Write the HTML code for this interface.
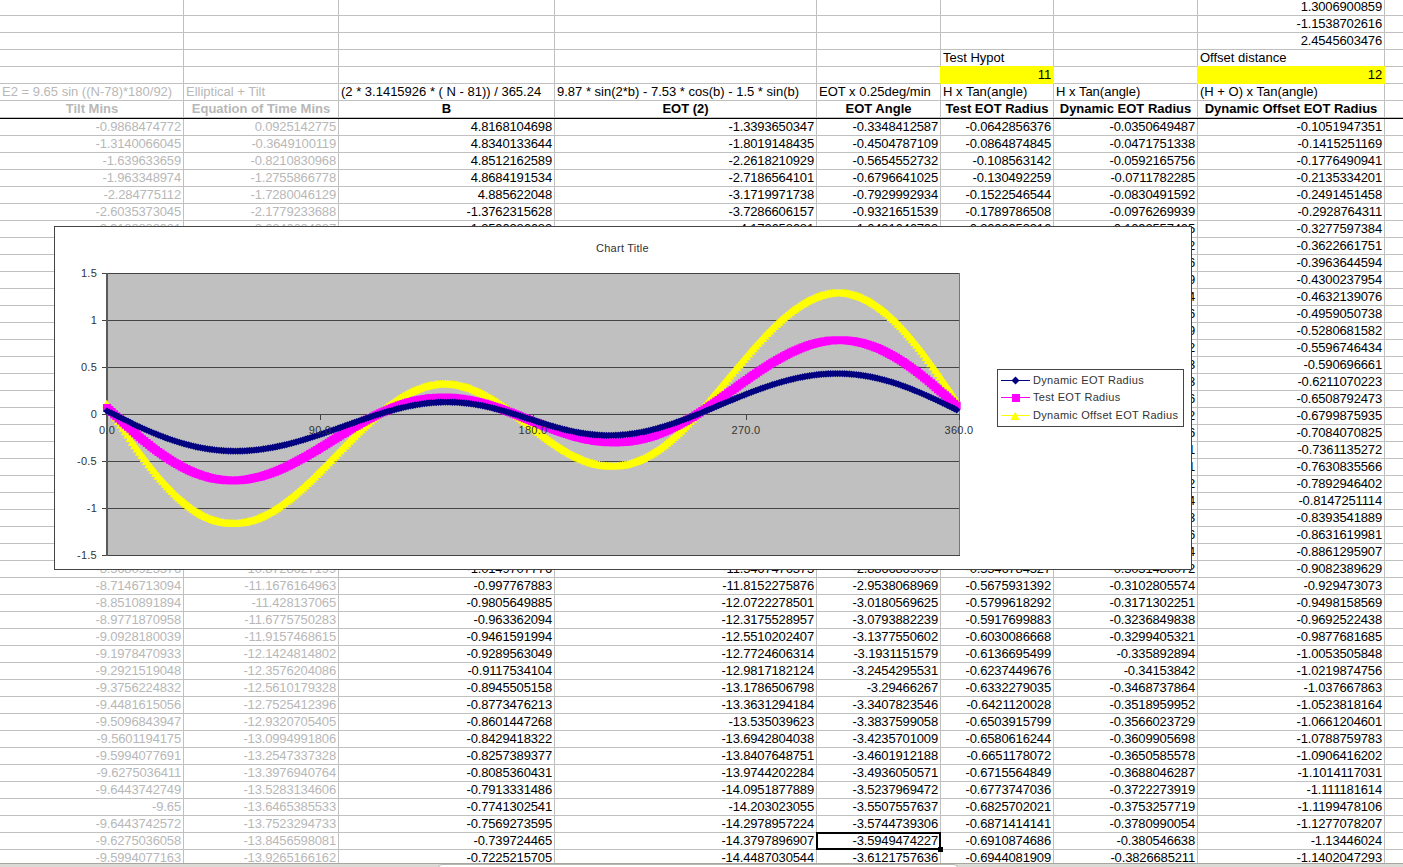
<!DOCTYPE html><html><head><meta charset="utf-8"><style>
html,body{margin:0;padding:0;}
body{width:1403px;height:867px;overflow:hidden;position:relative;background:#fff;font-family:"Liberation Sans",sans-serif;font-size:13px;color:#000;}
.h{position:absolute;left:0;width:1403px;height:1px;background:#c0c0c0}
.v{position:absolute;top:0;height:864px;width:1px;background:#c0c0c0}
.t{position:absolute;height:16px;line-height:16px;white-space:nowrap;overflow:visible}
.r{text-align:right}
.c{text-align:center;font-weight:bold}
.g{color:#b8b8b8}
.n{letter-spacing:-0.15px}

</style></head><body>
<div class="h" style="top:15px"></div>
<div class="h" style="top:32px"></div>
<div class="h" style="top:49px"></div>
<div class="h" style="top:66px"></div>
<div class="h" style="top:83px"></div>
<div class="h" style="top:100px"></div>
<div class="h" style="top:117px"></div>
<div class="h" style="top:135px"></div>
<div class="h" style="top:152px"></div>
<div class="h" style="top:169px"></div>
<div class="h" style="top:186px"></div>
<div class="h" style="top:203px"></div>
<div class="h" style="top:220px"></div>
<div class="h" style="top:237px"></div>
<div class="h" style="top:254px"></div>
<div class="h" style="top:271px"></div>
<div class="h" style="top:288px"></div>
<div class="h" style="top:305px"></div>
<div class="h" style="top:322px"></div>
<div class="h" style="top:339px"></div>
<div class="h" style="top:356px"></div>
<div class="h" style="top:373px"></div>
<div class="h" style="top:390px"></div>
<div class="h" style="top:407px"></div>
<div class="h" style="top:424px"></div>
<div class="h" style="top:441px"></div>
<div class="h" style="top:458px"></div>
<div class="h" style="top:475px"></div>
<div class="h" style="top:492px"></div>
<div class="h" style="top:509px"></div>
<div class="h" style="top:526px"></div>
<div class="h" style="top:543px"></div>
<div class="h" style="top:560px"></div>
<div class="h" style="top:577px"></div>
<div class="h" style="top:594px"></div>
<div class="h" style="top:611px"></div>
<div class="h" style="top:628px"></div>
<div class="h" style="top:645px"></div>
<div class="h" style="top:662px"></div>
<div class="h" style="top:679px"></div>
<div class="h" style="top:696px"></div>
<div class="h" style="top:713px"></div>
<div class="h" style="top:730px"></div>
<div class="h" style="top:747px"></div>
<div class="h" style="top:764px"></div>
<div class="h" style="top:781px"></div>
<div class="h" style="top:798px"></div>
<div class="h" style="top:815px"></div>
<div class="h" style="top:832px"></div>
<div class="h" style="top:849px"></div>
<div class="v" style="left:183px"></div>
<div class="v" style="left:338px"></div>
<div class="v" style="left:554px"></div>
<div class="v" style="left:816px"></div>
<div class="v" style="left:940px"></div>
<div class="v" style="left:1053px"></div>
<div class="v" style="left:1197px"></div>
<div class="v" style="left:1384px"></div>
<div style="position:absolute;left:940px;top:66px;width:114px;height:18px;background:#ffff00"></div>
<div style="position:absolute;left:1197px;top:66px;width:188px;height:18px;background:#ffff00"></div>
<div style="position:absolute;left:0;top:118px;width:1403px;height:1px;background:#000"></div>
<div class="t r n" style="left:1198px;width:184px;top:-1px;">1.3006900859</div>
<div class="t r n" style="left:1198px;width:184px;top:16px;">-1.1538702616</div>
<div class="t r n" style="left:1198px;width:184px;top:33px;">2.4545603476</div>
<div class="t l" style="left:943px;top:50px;">Test Hypot</div>
<div class="t l" style="left:1200px;top:50px;">Offset distance</div>
<div class="t r n" style="left:941px;width:110px;top:67px;">11</div>
<div class="t r n" style="left:1198px;width:184px;top:67px;">12</div>
<div class="t l g" style="left:2px;top:84px;">E2 = 9.65 sin ((N-78)*180/92)</div>
<div class="t l g" style="left:186px;top:84px;">Elliptical + Tilt</div>
<div class="t l" style="left:341px;top:84px;">(2 * 3.1415926 * ( N - 81)) / 365.24</div>
<div class="t l" style="left:557px;top:84px;">9.87 * sin(2*b) - 7.53 * cos(b) - 1.5 * sin(b)</div>
<div class="t l" style="left:819px;top:84px;">EOT x 0.25deg/min</div>
<div class="t l" style="left:943px;top:84px;">H x Tan(angle)</div>
<div class="t l" style="left:1056px;top:84px;">H x Tan(angle)</div>
<div class="t l" style="left:1200px;top:84px;">(H + O) x Tan(angle)</div>
<div class="t c g" style="left:1px;width:182px;top:101px;">Tilt Mins</div>
<div class="t c g" style="left:184px;width:154px;top:101px;">Equation of Time Mins</div>
<div class="t c" style="left:339px;width:215px;top:101px;">B</div>
<div class="t c" style="left:555px;width:261px;top:101px;">EOT (2)</div>
<div class="t c" style="left:817px;width:123px;top:101px;">EOT Angle</div>
<div class="t c" style="left:941px;width:112px;top:101px;">Test EOT Radius</div>
<div class="t c" style="left:1054px;width:143px;top:101px;">Dynamic EOT Radius</div>
<div class="t c" style="left:1198px;width:186px;top:101px;">Dynamic Offset EOT Radius</div>
<div class="t r n g" style="left:1px;width:180px;top:119px;">-0.9868474772</div>
<div class="t r n g" style="left:184px;width:152px;top:119px;">0.0925142775</div>
<div class="t r n" style="left:339px;width:213px;top:119px;">4.8168104698</div>
<div class="t r n" style="left:555px;width:259px;top:119px;">-1.3393650347</div>
<div class="t r n" style="left:817px;width:121px;top:119px;">-0.3348412587</div>
<div class="t r n" style="left:941px;width:110px;top:119px;">-0.0642856376</div>
<div class="t r n" style="left:1054px;width:141px;top:119px;">-0.0350649487</div>
<div class="t r n" style="left:1198px;width:184px;top:119px;">-0.1051947351</div>
<div class="t r n g" style="left:1px;width:180px;top:136px;">-1.3140066045</div>
<div class="t r n g" style="left:184px;width:152px;top:136px;">-0.3649100119</div>
<div class="t r n" style="left:339px;width:213px;top:136px;">4.8340133644</div>
<div class="t r n" style="left:555px;width:259px;top:136px;">-1.8019148435</div>
<div class="t r n" style="left:817px;width:121px;top:136px;">-0.4504787109</div>
<div class="t r n" style="left:941px;width:110px;top:136px;">-0.0864874845</div>
<div class="t r n" style="left:1054px;width:141px;top:136px;">-0.0471751338</div>
<div class="t r n" style="left:1198px;width:184px;top:136px;">-0.1415251169</div>
<div class="t r n g" style="left:1px;width:180px;top:153px;">-1.639633659</div>
<div class="t r n g" style="left:184px;width:152px;top:153px;">-0.8210830968</div>
<div class="t r n" style="left:339px;width:213px;top:153px;">4.8512162589</div>
<div class="t r n" style="left:555px;width:259px;top:153px;">-2.2618210929</div>
<div class="t r n" style="left:817px;width:121px;top:153px;">-0.5654552732</div>
<div class="t r n" style="left:941px;width:110px;top:153px;">-0.108563142</div>
<div class="t r n" style="left:1054px;width:141px;top:153px;">-0.0592165756</div>
<div class="t r n" style="left:1198px;width:184px;top:153px;">-0.1776490941</div>
<div class="t r n g" style="left:1px;width:180px;top:170px;">-1.963348974</div>
<div class="t r n g" style="left:184px;width:152px;top:170px;">-1.2755866778</div>
<div class="t r n" style="left:339px;width:213px;top:170px;">4.8684191534</div>
<div class="t r n" style="left:555px;width:259px;top:170px;">-2.7186564101</div>
<div class="t r n" style="left:817px;width:121px;top:170px;">-0.6796641025</div>
<div class="t r n" style="left:941px;width:110px;top:170px;">-0.130492259</div>
<div class="t r n" style="left:1054px;width:141px;top:170px;">-0.0711782285</div>
<div class="t r n" style="left:1198px;width:184px;top:170px;">-0.2135334201</div>
<div class="t r n g" style="left:1px;width:180px;top:187px;">-2.284775112</div>
<div class="t r n g" style="left:184px;width:152px;top:187px;">-1.7280046129</div>
<div class="t r n" style="left:339px;width:213px;top:187px;">4.885622048</div>
<div class="t r n" style="left:555px;width:259px;top:187px;">-3.1719971738</div>
<div class="t r n" style="left:817px;width:121px;top:187px;">-0.7929992934</div>
<div class="t r n" style="left:941px;width:110px;top:187px;">-0.1522546544</div>
<div class="t r n" style="left:1054px;width:141px;top:187px;">-0.0830491592</div>
<div class="t r n" style="left:1198px;width:184px;top:187px;">-0.2491451458</div>
<div class="t r n g" style="left:1px;width:180px;top:204px;">-2.6035373045</div>
<div class="t r n g" style="left:184px;width:152px;top:204px;">-2.1779233688</div>
<div class="t r n" style="left:339px;width:213px;top:204px;">-1.3762315628</div>
<div class="t r n" style="left:555px;width:259px;top:204px;">-3.7286606157</div>
<div class="t r n" style="left:817px;width:121px;top:204px;">-0.9321651539</div>
<div class="t r n" style="left:941px;width:110px;top:204px;">-0.1789786508</div>
<div class="t r n" style="left:1054px;width:141px;top:204px;">-0.0976269939</div>
<div class="t r n" style="left:1198px;width:184px;top:204px;">-0.2928764311</div>
<div class="t r n g" style="left:1px;width:180px;top:221px;">-2.9188882921</div>
<div class="t r n g" style="left:184px;width:152px;top:221px;">-2.6240634987</div>
<div class="t r n" style="left:339px;width:213px;top:221px;">-1.3590286683</div>
<div class="t r n" style="left:555px;width:259px;top:221px;">-4.172658681</div>
<div class="t r n" style="left:817px;width:121px;top:221px;">-1.0431646703</div>
<div class="t r n" style="left:941px;width:110px;top:221px;">-0.2002953316</div>
<div class="t r n" style="left:1054px;width:141px;top:221px;">-0.1092557405</div>
<div class="t r n" style="left:1198px;width:184px;top:221px;">-0.3277597384</div>
<div class="t r n g" style="left:1px;width:180px;top:238px;">-3.2315882575</div>
<div class="t r n g" style="left:184px;width:152px;top:238px;">-3.0720095317</div>
<div class="t r n" style="left:339px;width:213px;top:238px;">-1.3418257737</div>
<div class="t r n" style="left:555px;width:259px;top:238px;">-4.6118209902</div>
<div class="t r n" style="left:817px;width:121px;top:238px;">-1.1529552475</div>
<div class="t r n" style="left:941px;width:110px;top:238px;">-0.2213813142</div>
<div class="t r n" style="left:1054px;width:141px;top:238px;">-0.1207592862</div>
<div class="t r n" style="left:1198px;width:184px;top:238px;">-0.3622661751</div>
<div class="t r n g" style="left:1px;width:180px;top:255px;">-3.5401432115</div>
<div class="t r n g" style="left:184px;width:152px;top:255px;">-3.5121725994</div>
<div class="t r n" style="left:339px;width:213px;top:255px;">-1.3246228792</div>
<div class="t r n" style="left:555px;width:259px;top:255px;">-5.0457449492</div>
<div class="t r n" style="left:817px;width:121px;top:255px;">-1.2614362373</div>
<div class="t r n" style="left:941px;width:110px;top:255px;">-0.2422173642</div>
<div class="t r n" style="left:1054px;width:141px;top:255px;">-0.1321273346</div>
<div class="t r n" style="left:1198px;width:184px;top:255px;">-0.3963644594</div>
<div class="t r n g" style="left:1px;width:180px;top:272px;">-3.844570517</div>
<div class="t r n g" style="left:184px;width:152px;top:272px;">-3.9482163068</div>
<div class="t r n" style="left:339px;width:213px;top:272px;">-1.3074199847</div>
<div class="t r n" style="left:555px;width:259px;top:272px;">-5.4740340991</div>
<div class="t r n" style="left:817px;width:121px;top:272px;">-1.3685085248</div>
<div class="t r n" style="left:941px;width:110px;top:272px;">-0.2627845317</div>
<div class="t r n" style="left:1054px;width:141px;top:272px;">-0.1433497609</div>
<div class="t r n" style="left:1198px;width:184px;top:272px;">-0.4300237954</div>
<div class="t r n g" style="left:1px;width:180px;top:289px;">-4.1445152252</div>
<div class="t r n g" style="left:184px;width:152px;top:289px;">-4.3797467045</div>
<div class="t r n" style="left:339px;width:213px;top:289px;">-1.2902170901</div>
<div class="t r n" style="left:555px;width:259px;top:289px;">-5.8962985509</div>
<div class="t r n" style="left:817px;width:121px;top:289px;">-1.4740746377</div>
<div class="t r n" style="left:941px;width:110px;top:289px;">-0.2830641661</div>
<div class="t r n" style="left:1054px;width:141px;top:289px;">-0.1544166354</div>
<div class="t r n" style="left:1198px;width:184px;top:289px;">-0.4632139076</div>
<div class="t r n g" style="left:1px;width:180px;top:306px;">-4.4396276141</div>
<div class="t r n g" style="left:184px;width:152px;top:306px;">-4.8063750788</div>
<div class="t r n" style="left:339px;width:213px;top:306px;">-1.2730141956</div>
<div class="t r n" style="left:555px;width:259px;top:306px;">-6.3121554119</div>
<div class="t r n" style="left:817px;width:121px;top:306px;">-1.578038853</div>
<div class="t r n" style="left:941px;width:110px;top:306px;">-0.3030379365</div>
<div class="t r n" style="left:1054px;width:141px;top:306px;">-0.1653182346</div>
<div class="t r n" style="left:1198px;width:184px;top:306px;">-0.4959050738</div>
<div class="t r n g" style="left:1px;width:180px;top:323px;">-4.7295635958</div>
<div class="t r n g" style="left:184px;width:152px;top:323px;">-5.2277183711</div>
<div class="t r n" style="left:339px;width:213px;top:323px;">-1.2558113011</div>
<div class="t r n" style="left:555px;width:259px;top:323px;">-6.7212292045</div>
<div class="t r n" style="left:817px;width:121px;top:323px;">-1.6803073011</div>
<div class="t r n" style="left:941px;width:110px;top:323px;">-0.3226878508</div>
<div class="t r n" style="left:1054px;width:141px;top:323px;">-0.1760450489</div>
<div class="t r n" style="left:1198px;width:184px;top:323px;">-0.5280681582</div>
<div class="t r n g" style="left:1px;width:180px;top:340px;">-5.0139851178</div>
<div class="t r n g" style="left:184px;width:152px;top:340px;">-5.6433995902</div>
<div class="t r n" style="left:339px;width:213px;top:340px;">-1.2386084065</div>
<div class="t r n" style="left:555px;width:259px;top:340px;">-7.1231522765</div>
<div class="t r n" style="left:817px;width:121px;top:340px;">-1.7807880691</div>
<div class="t r n" style="left:941px;width:110px;top:340px;">-0.3419962762</div>
<div class="t r n" style="left:1054px;width:141px;top:340px;">-0.1865877962</div>
<div class="t r n" style="left:1198px;width:184px;top:340px;">-0.5596746434</div>
<div class="t r n g" style="left:1px;width:180px;top:357px;">-5.2925605576</div>
<div class="t r n g" style="left:184px;width:152px;top:357px;">-6.0530482183</div>
<div class="t r n" style="left:339px;width:213px;top:357px;">-1.221405512</div>
<div class="t r n" style="left:555px;width:259px;top:357px;">-7.5175652011</div>
<div class="t r n" style="left:817px;width:121px;top:357px;">-1.8793913003</div>
<div class="t r n" style="left:941px;width:110px;top:357px;">-0.3609459569</div>
<div class="t r n" style="left:1054px;width:141px;top:357px;">-0.1969374353</div>
<div class="t r n" style="left:1198px;width:184px;top:357px;">-0.590696661</div>
<div class="t r n g" style="left:1px;width:180px;top:374px;">-5.5649651084</div>
<div class="t r n g" style="left:184px;width:152px;top:374px;">-6.4563006093</div>
<div class="t r n" style="left:339px;width:213px;top:374px;">-1.2042026175</div>
<div class="t r n" style="left:555px;width:259px;top:374px;">-7.9041171683</div>
<div class="t r n" style="left:817px;width:121px;top:374px;">-1.9760292921</div>
<div class="t r n" style="left:941px;width:110px;top:374px;">-0.379520034</div>
<div class="t r n" style="left:1054px;width:141px;top:374px;">-0.2070851673</div>
<div class="t r n" style="left:1198px;width:184px;top:374px;">-0.6211070223</div>
<div class="t r n g" style="left:1px;width:180px;top:391px;">-5.8308811589</div>
<div class="t r n g" style="left:184px;width:152px;top:391px;">-6.8528003788</div>
<div class="t r n" style="left:339px;width:213px;top:391px;">-1.1869997229</div>
<div class="t r n" style="left:555px;width:259px;top:391px;">-8.2824663659</div>
<div class="t r n" style="left:817px;width:121px;top:391px;">-2.0706165915</div>
<div class="t r n" style="left:941px;width:110px;top:391px;">-0.3977020633</div>
<div class="t r n" style="left:1054px;width:141px;top:391px;">-0.2170224516</div>
<div class="t r n" style="left:1198px;width:184px;top:391px;">-0.6508792473</div>
<div class="t r n g" style="left:1px;width:180px;top:408px;">-6.0899986627</div>
<div class="t r n g" style="left:184px;width:152px;top:408px;">-7.2421987857</div>
<div class="t r n" style="left:339px;width:213px;top:408px;">-1.1697968284</div>
<div class="t r n" style="left:555px;width:259px;top:408px;">-8.6522803494</div>
<div class="t r n" style="left:817px;width:121px;top:408px;">-2.1630700873</div>
<div class="t r n" style="left:941px;width:110px;top:408px;">-0.4154760336</div>
<div class="t r n" style="left:1054px;width:141px;top:408px;">-0.2267410112</div>
<div class="t r n" style="left:1198px;width:184px;top:408px;">-0.6799875935</div>
<div class="t r n g" style="left:1px;width:180px;top:425px;">-6.3420155006</div>
<div class="t r n g" style="left:184px;width:152px;top:425px;">-7.6241551058</div>
<div class="t r n" style="left:339px;width:213px;top:425px;">-1.1525939339</div>
<div class="t r n" style="left:555px;width:259px;top:425px;">-9.0132364018</div>
<div class="t r n" style="left:817px;width:121px;top:425px;">-2.2533091005</div>
<div class="t r n" style="left:941px;width:110px;top:425px;">-0.432826384</div>
<div class="t r n" style="left:1054px;width:141px;top:425px;">-0.2362328456</div>
<div class="t r n" style="left:1198px;width:184px;top:425px;">-0.7084070825</div>
<div class="t r n g" style="left:1px;width:180px;top:442px;">-6.5866378321</div>
<div class="t r n g" style="left:184px;width:152px;top:442px;">-7.9983369949</div>
<div class="t r n" style="left:339px;width:213px;top:442px;">-1.1353910393</div>
<div class="t r n" style="left:555px;width:259px;top:442px;">-9.3650218814</div>
<div class="t r n" style="left:817px;width:121px;top:442px;">-2.3412554703</div>
<div class="t r n" style="left:941px;width:110px;top:442px;">-0.4497380214</div>
<div class="t r n" style="left:1054px;width:141px;top:442px;">-0.2454902311</div>
<div class="t r n" style="left:1198px;width:184px;top:442px;">-0.7361135272</div>
<div class="t r n g" style="left:1px;width:180px;top:459px;">-6.8235804385</div>
<div class="t r n g" style="left:184px;width:152px;top:459px;">-8.3644208432</div>
<div class="t r n" style="left:339px;width:213px;top:459px;">-1.1181881448</div>
<div class="t r n" style="left:555px;width:259px;top:459px;">-9.7073345577</div>
<div class="t r n" style="left:817px;width:121px;top:459px;">-2.4268336394</div>
<div class="t r n" style="left:941px;width:110px;top:459px;">-0.4661963368</div>
<div class="t r n" style="left:1054px;width:141px;top:459px;">-0.2545057341</div>
<div class="t r n" style="left:1198px;width:184px;top:459px;">-0.7630835566</div>
<div class="t r n g" style="left:1px;width:180px;top:476px;">-7.0525670553</div>
<div class="t r n g" style="left:184px;width:152px;top:476px;">-8.722092119</div>
<div class="t r n" style="left:339px;width:213px;top:476px;">-1.1009852502</div>
<div class="t r n" style="left:555px;width:259px;top:476px;">-10.0398829358</div>
<div class="t r n" style="left:817px;width:121px;top:476px;">-2.5099707339</div>
<div class="t r n" style="left:941px;width:110px;top:476px;">-0.4821872219</div>
<div class="t r n" style="left:1054px;width:141px;top:476px;">-0.2632722162</div>
<div class="t r n" style="left:1198px;width:184px;top:476px;">-0.7892946402</div>
<div class="t r n g" style="left:1px;width:180px;top:493px;">-7.2733306944</div>
<div class="t r n g" style="left:184px;width:152px;top:493px;">-9.0710457021</div>
<div class="t r n" style="left:339px;width:213px;top:493px;">-1.0837823557</div>
<div class="t r n" style="left:555px;width:259px;top:493px;">-10.3623865673</div>
<div class="t r n" style="left:817px;width:121px;top:493px;">-2.5905966418</div>
<div class="t r n" style="left:941px;width:110px;top:493px;">-0.4976970851</div>
<div class="t r n" style="left:1054px;width:141px;top:493px;">-0.2717828364</div>
<div class="t r n" style="left:1198px;width:184px;top:493px;">-0.8147251114</div>
<div class="t r n g" style="left:1px;width:180px;top:510px;">-7.4856139553</div>
<div class="t r n g" style="left:184px;width:152px;top:510px;">-9.4109862067</div>
<div class="t r n" style="left:339px;width:213px;top:510px;">-1.0665794612</div>
<div class="t r n" style="left:555px;width:259px;top:510px;">-10.6745763491</div>
<div class="t r n" style="left:817px;width:121px;top:510px;">-2.6686440873</div>
<div class="t r n" style="left:941px;width:110px;top:510px;">-0.5127128657</div>
<div class="t r n" style="left:1054px;width:141px;top:510px;">-0.2800310623</div>
<div class="t r n" style="left:1198px;width:184px;top:510px;">-0.8393541889</div>
<div class="t r n g" style="left:1px;width:180px;top:527px;">-7.6891693252</div>
<div class="t r n g" style="left:184px;width:152px;top:527px;">-9.7416282925</div>
<div class="t r n" style="left:339px;width:213px;top:527px;">-1.0493765666</div>
<div class="t r n" style="left:555px;width:259px;top:527px;">-10.9761948086</div>
<div class="t r n" style="left:817px;width:121px;top:527px;">-2.7440487021</div>
<div class="t r n" style="left:941px;width:110px;top:527px;">-0.5272220498</div>
<div class="t r n" style="left:1054px;width:141px;top:527px;">-0.2880106716</div>
<div class="t r n" style="left:1198px;width:184px;top:527px;">-0.8631619981</div>
<div class="t r n g" style="left:1px;width:180px;top:544px;">-7.8837594676</div>
<div class="t r n g" style="left:184px;width:152px;top:544px;">-10.0626969646</div>
<div class="t r n" style="left:339px;width:213px;top:544px;">-1.0321736721</div>
<div class="t r n" style="left:555px;width:259px;top:544px;">-11.266996375</div>
<div class="t r n" style="left:817px;width:121px;top:544px;">-2.8167490937</div>
<div class="t r n" style="left:941px;width:110px;top:544px;">-0.5412126837</div>
<div class="t r n" style="left:1054px;width:141px;top:544px;">-0.2957157544</div>
<div class="t r n" style="left:1198px;width:184px;top:544px;">-0.8861295907</div>
<div class="t r n g" style="left:1px;width:180px;top:561px;">-8.5680923576</div>
<div class="t r n g" style="left:184px;width:152px;top:561px;">-10.8728627199</div>
<div class="t r n" style="left:339px;width:213px;top:561px;">-1.0149707776</div>
<div class="t r n" style="left:555px;width:259px;top:561px;">-11.5467476373</div>
<div class="t r n" style="left:817px;width:121px;top:561px;">-2.8866869093</div>
<div class="t r n" style="left:941px;width:110px;top:561px;">-0.5546784527</div>
<div class="t r n" style="left:1054px;width:141px;top:561px;">-0.3031486072</div>
<div class="t r n" style="left:1198px;width:184px;top:561px;">-0.9082389629</div>
<div class="t r n g" style="left:1px;width:180px;top:578px;">-8.7146713094</div>
<div class="t r n g" style="left:184px;width:152px;top:578px;">-11.1676164963</div>
<div class="t r n" style="left:339px;width:213px;top:578px;">-0.997767883</div>
<div class="t r n" style="left:555px;width:259px;top:578px;">-11.8152275876</div>
<div class="t r n" style="left:817px;width:121px;top:578px;">-2.9538068969</div>
<div class="t r n" style="left:941px;width:110px;top:578px;">-0.5675931392</div>
<div class="t r n" style="left:1054px;width:141px;top:578px;">-0.3102805574</div>
<div class="t r n" style="left:1198px;width:184px;top:578px;">-0.929473073</div>
<div class="t r n g" style="left:1px;width:180px;top:595px;">-8.8510891894</div>
<div class="t r n g" style="left:184px;width:152px;top:595px;">-11.428137065</div>
<div class="t r n" style="left:339px;width:213px;top:595px;">-0.9805649885</div>
<div class="t r n" style="left:555px;width:259px;top:595px;">-12.0722278501</div>
<div class="t r n" style="left:817px;width:121px;top:595px;">-3.0180569625</div>
<div class="t r n" style="left:941px;width:110px;top:595px;">-0.5799618292</div>
<div class="t r n" style="left:1054px;width:141px;top:595px;">-0.3171302251</div>
<div class="t r n" style="left:1198px;width:184px;top:595px;">-0.9498158569</div>
<div class="t r n g" style="left:1px;width:180px;top:612px;">-8.9771870958</div>
<div class="t r n g" style="left:184px;width:152px;top:612px;">-11.6775750283</div>
<div class="t r n" style="left:339px;width:213px;top:612px;">-0.963362094</div>
<div class="t r n" style="left:555px;width:259px;top:612px;">-12.3175528957</div>
<div class="t r n" style="left:817px;width:121px;top:612px;">-3.0793882239</div>
<div class="t r n" style="left:941px;width:110px;top:612px;">-0.5917699883</div>
<div class="t r n" style="left:1054px;width:141px;top:612px;">-0.3236849838</div>
<div class="t r n" style="left:1198px;width:184px;top:612px;">-0.9692522438</div>
<div class="t r n g" style="left:1px;width:180px;top:629px;">-9.0928180039</div>
<div class="t r n g" style="left:184px;width:152px;top:629px;">-11.9157468615</div>
<div class="t r n" style="left:339px;width:213px;top:629px;">-0.9461591994</div>
<div class="t r n" style="left:555px;width:259px;top:629px;">-12.5510202407</div>
<div class="t r n" style="left:817px;width:121px;top:629px;">-3.1377550602</div>
<div class="t r n" style="left:941px;width:110px;top:629px;">-0.6030086668</div>
<div class="t r n" style="left:1054px;width:141px;top:629px;">-0.3299405321</div>
<div class="t r n" style="left:1198px;width:184px;top:629px;">-0.9877681685</div>
<div class="t r n g" style="left:1px;width:180px;top:646px;">-9.1978470933</div>
<div class="t r n g" style="left:184px;width:152px;top:646px;">-12.1424814802</div>
<div class="t r n" style="left:339px;width:213px;top:646px;">-0.9289563049</div>
<div class="t r n" style="left:555px;width:259px;top:646px;">-12.7724606314</div>
<div class="t r n" style="left:817px;width:121px;top:646px;">-3.1931151579</div>
<div class="t r n" style="left:941px;width:110px;top:646px;">-0.6136695499</div>
<div class="t r n" style="left:1054px;width:141px;top:646px;">-0.335892894</div>
<div class="t r n" style="left:1198px;width:184px;top:646px;">-1.0053505848</div>
<div class="t r n g" style="left:1px;width:180px;top:663px;">-9.2921519048</div>
<div class="t r n g" style="left:184px;width:152px;top:663px;">-12.3576204086</div>
<div class="t r n" style="left:339px;width:213px;top:663px;">-0.9117534104</div>
<div class="t r n" style="left:555px;width:259px;top:663px;">-12.9817182124</div>
<div class="t r n" style="left:817px;width:121px;top:663px;">-3.2454295531</div>
<div class="t r n" style="left:941px;width:110px;top:663px;">-0.6237449676</div>
<div class="t r n" style="left:1054px;width:141px;top:663px;">-0.34153842</div>
<div class="t r n" style="left:1198px;width:184px;top:663px;">-1.0219874756</div>
<div class="t r n g" style="left:1px;width:180px;top:680px;">-9.3756224832</div>
<div class="t r n g" style="left:184px;width:152px;top:680px;">-12.5610179328</div>
<div class="t r n" style="left:339px;width:213px;top:680px;">-0.8945505158</div>
<div class="t r n" style="left:555px;width:259px;top:680px;">-13.1786506798</div>
<div class="t r n" style="left:817px;width:121px;top:680px;">-3.29466267</div>
<div class="t r n" style="left:941px;width:110px;top:680px;">-0.6332279035</div>
<div class="t r n" style="left:1054px;width:141px;top:680px;">-0.3468737864</div>
<div class="t r n" style="left:1198px;width:184px;top:680px;">-1.037667863</div>
<div class="t r n g" style="left:1px;width:180px;top:697px;">-9.4481615056</div>
<div class="t r n g" style="left:184px;width:152px;top:697px;">-12.7525412396</div>
<div class="t r n" style="left:339px;width:213px;top:697px;">-0.8773476213</div>
<div class="t r n" style="left:555px;width:259px;top:697px;">-13.3631294184</div>
<div class="t r n" style="left:817px;width:121px;top:697px;">-3.3407823546</div>
<div class="t r n" style="left:941px;width:110px;top:697px;">-0.6421120028</div>
<div class="t r n" style="left:1054px;width:141px;top:697px;">-0.3518959952</div>
<div class="t r n" style="left:1198px;width:184px;top:697px;">-1.0523818164</div>
<div class="t r n g" style="left:1px;width:180px;top:714px;">-9.5096843947</div>
<div class="t r n g" style="left:184px;width:152px;top:714px;">-12.9320705405</div>
<div class="t r n" style="left:339px;width:213px;top:714px;">-0.8601447268</div>
<div class="t r n" style="left:555px;width:259px;top:714px;">-13.535039623</div>
<div class="t r n" style="left:817px;width:121px;top:714px;">-3.3837599058</div>
<div class="t r n" style="left:941px;width:110px;top:714px;">-0.6503915799</div>
<div class="t r n" style="left:1054px;width:141px;top:714px;">-0.3566023729</div>
<div class="t r n" style="left:1198px;width:184px;top:714px;">-1.0661204601</div>
<div class="t r n g" style="left:1px;width:180px;top:731px;">-9.5601194175</div>
<div class="t r n g" style="left:184px;width:152px;top:731px;">-13.0994991806</div>
<div class="t r n" style="left:339px;width:213px;top:731px;">-0.8429418322</div>
<div class="t r n" style="left:555px;width:259px;top:731px;">-13.6942804038</div>
<div class="t r n" style="left:817px;width:121px;top:731px;">-3.4235701009</div>
<div class="t r n" style="left:941px;width:110px;top:731px;">-0.6580616244</div>
<div class="t r n" style="left:1054px;width:141px;top:731px;">-0.3609905698</div>
<div class="t r n" style="left:1198px;width:184px;top:731px;">-1.0788759783</div>
<div class="t r n g" style="left:1px;width:180px;top:748px;">-9.5994077691</div>
<div class="t r n g" style="left:184px;width:152px;top:748px;">-13.2547337328</div>
<div class="t r n" style="left:339px;width:213px;top:748px;">-0.8257389377</div>
<div class="t r n" style="left:555px;width:259px;top:748px;">-13.8407648751</div>
<div class="t r n" style="left:817px;width:121px;top:748px;">-3.4601912188</div>
<div class="t r n" style="left:941px;width:110px;top:748px;">-0.6651178072</div>
<div class="t r n" style="left:1054px;width:141px;top:748px;">-0.3650585578</div>
<div class="t r n" style="left:1198px;width:184px;top:748px;">-1.0906416202</div>
<div class="t r n g" style="left:1px;width:180px;top:765px;">-9.6275036411</div>
<div class="t r n g" style="left:184px;width:152px;top:765px;">-13.3976940764</div>
<div class="t r n" style="left:339px;width:213px;top:765px;">-0.8085360431</div>
<div class="t r n" style="left:555px;width:259px;top:765px;">-13.9744202284</div>
<div class="t r n" style="left:817px;width:121px;top:765px;">-3.4936050571</div>
<div class="t r n" style="left:941px;width:110px;top:765px;">-0.6715564849</div>
<div class="t r n" style="left:1054px;width:141px;top:765px;">-0.3688046287</div>
<div class="t r n" style="left:1198px;width:184px;top:765px;">-1.1014117031</div>
<div class="t r n g" style="left:1px;width:180px;top:782px;">-9.6443742749</div>
<div class="t r n g" style="left:184px;width:152px;top:782px;">-13.5283134606</div>
<div class="t r n" style="left:339px;width:213px;top:782px;">-0.7913331486</div>
<div class="t r n" style="left:555px;width:259px;top:782px;">-14.0951877889</div>
<div class="t r n" style="left:817px;width:121px;top:782px;">-3.5237969472</div>
<div class="t r n" style="left:941px;width:110px;top:782px;">-0.6773747036</div>
<div class="t r n" style="left:1054px;width:141px;top:782px;">-0.3722273919</div>
<div class="t r n" style="left:1198px;width:184px;top:782px;">-1.111181614</div>
<div class="t r n g" style="left:1px;width:180px;top:799px;">-9.65</div>
<div class="t r n g" style="left:184px;width:152px;top:799px;">-13.6465385533</div>
<div class="t r n" style="left:339px;width:213px;top:799px;">-0.7741302541</div>
<div class="t r n" style="left:555px;width:259px;top:799px;">-14.203023055</div>
<div class="t r n" style="left:817px;width:121px;top:799px;">-3.5507557637</div>
<div class="t r n" style="left:941px;width:110px;top:799px;">-0.6825702021</div>
<div class="t r n" style="left:1054px;width:141px;top:799px;">-0.3753257719</div>
<div class="t r n" style="left:1198px;width:184px;top:799px;">-1.1199478106</div>
<div class="t r n g" style="left:1px;width:180px;top:816px;">-9.6443742572</div>
<div class="t r n g" style="left:184px;width:152px;top:816px;">-13.7523294733</div>
<div class="t r n" style="left:339px;width:213px;top:816px;">-0.7569273595</div>
<div class="t r n" style="left:555px;width:259px;top:816px;">-14.2978957224</div>
<div class="t r n" style="left:817px;width:121px;top:816px;">-3.5744739306</div>
<div class="t r n" style="left:941px;width:110px;top:816px;">-0.6871414141</div>
<div class="t r n" style="left:1054px;width:141px;top:816px;">-0.3780990054</div>
<div class="t r n" style="left:1198px;width:184px;top:816px;">-1.1277078207</div>
<div class="t r n g" style="left:1px;width:180px;top:833px;">-9.6275036058</div>
<div class="t r n g" style="left:184px;width:152px;top:833px;">-13.8456598081</div>
<div class="t r n" style="left:339px;width:213px;top:833px;">-0.739724465</div>
<div class="t r n" style="left:555px;width:259px;top:833px;">-14.3797896907</div>
<div class="t r n" style="left:817px;width:121px;top:833px;">-3.5949474227</div>
<div class="t r n" style="left:941px;width:110px;top:833px;">-0.6910874686</div>
<div class="t r n" style="left:1054px;width:141px;top:833px;">-0.380546638</div>
<div class="t r n" style="left:1198px;width:184px;top:833px;">-1.13446024</div>
<div class="t r n g" style="left:1px;width:180px;top:850px;">-9.5994077163</div>
<div class="t r n g" style="left:184px;width:152px;top:850px;">-13.9265166162</div>
<div class="t r n" style="left:339px;width:213px;top:850px;">-0.7225215705</div>
<div class="t r n" style="left:555px;width:259px;top:850px;">-14.4487030544</div>
<div class="t r n" style="left:817px;width:121px;top:850px;">-3.6121757636</div>
<div class="t r n" style="left:941px;width:110px;top:850px;">-0.6944081909</div>
<div class="t r n" style="left:1054px;width:141px;top:850px;">-0.3826685211</div>
<div class="t r n" style="left:1198px;width:184px;top:850px;">-1.1402047293</div>
<div style="position:absolute;left:816px;top:832px;width:121px;height:14px;border:2px solid #000"></div>
<div style="position:absolute;left:938px;top:847px;width:5px;height:5px;background:#000"></div>
<svg width="1138" height="344" style="position:absolute;left:54px;top:226px" viewBox="54 226 1138 344"><rect x="54.5" y="226.5" width="1137" height="343" fill="#fff" stroke="#444" stroke-width="1"/><rect x="107" y="273" width="853" height="282" fill="#c0c0c0"/><line x1="102" y1="273.5" x2="960" y2="273.5" stroke="#444" stroke-width="1"/><line x1="102" y1="320.5" x2="960" y2="320.5" stroke="#444" stroke-width="1"/><line x1="102" y1="367.5" x2="960" y2="367.5" stroke="#444" stroke-width="1"/><line x1="102" y1="414.5" x2="960" y2="414.5" stroke="#444" stroke-width="1"/><line x1="102" y1="461.5" x2="960" y2="461.5" stroke="#444" stroke-width="1"/><line x1="102" y1="508.5" x2="960" y2="508.5" stroke="#444" stroke-width="1"/><line x1="102" y1="555.5" x2="960" y2="555.5" stroke="#444" stroke-width="1"/><line x1="959.5" y1="273" x2="959.5" y2="555" stroke="#777" stroke-width="1"/><line x1="107.5" y1="414" x2="107.5" y2="420" stroke="#444" stroke-width="1"/><line x1="320.5" y1="414" x2="320.5" y2="420" stroke="#444" stroke-width="1"/><line x1="533.5" y1="414" x2="533.5" y2="420" stroke="#444" stroke-width="1"/><line x1="746.5" y1="414" x2="746.5" y2="420" stroke="#444" stroke-width="1"/><line x1="959.5" y1="414" x2="959.5" y2="420" stroke="#444" stroke-width="1"/><rect x="106" y="273" width="2" height="283" fill="#5a5a5a"/><path d="M106.75 400.17l0.5 0l4 7.5h-9l4 -7.5zM109.08 403.63l0.5 0l4 7.5h-9l4 -7.5zM111.42 407.10l0.5 0l4 7.5h-9l4 -7.5zM113.75 410.56l0.5 0l4 7.5h-9l4 -7.5zM116.09 414.01l0.5 0l4 7.5h-9l4 -7.5zM118.42 417.46l0.5 0l4 7.5h-9l4 -7.5zM120.76 420.89l0.5 0l4 7.5h-9l4 -7.5zM123.09 424.30l0.5 0l4 7.5h-9l4 -7.5zM125.42 427.70l0.5 0l4 7.5h-9l4 -7.5zM127.76 431.07l0.5 0l4 7.5h-9l4 -7.5zM130.09 434.42l0.5 0l4 7.5h-9l4 -7.5zM132.43 438.53l0.5 0l4 7.5h-9l4 -7.5zM134.76 441.81l0.5 0l4 7.5h-9l4 -7.5zM137.10 445.05l0.5 0l4 7.5h-9l4 -7.5zM139.43 448.26l0.5 0l4 7.5h-9l4 -7.5zM141.76 451.42l0.5 0l4 7.5h-9l4 -7.5zM144.10 454.54l0.5 0l4 7.5h-9l4 -7.5zM146.43 457.62l0.5 0l4 7.5h-9l4 -7.5zM148.77 460.64l0.5 0l4 7.5h-9l4 -7.5zM151.10 463.61l0.5 0l4 7.5h-9l4 -7.5zM153.43 466.53l0.5 0l4 7.5h-9l4 -7.5zM155.77 469.38l0.5 0l4 7.5h-9l4 -7.5zM158.10 472.18l0.5 0l4 7.5h-9l4 -7.5zM160.44 474.92l0.5 0l4 7.5h-9l4 -7.5zM162.77 477.59l0.5 0l4 7.5h-9l4 -7.5zM165.11 480.19l0.5 0l4 7.5h-9l4 -7.5zM167.44 482.73l0.5 0l4 7.5h-9l4 -7.5zM169.77 485.19l0.5 0l4 7.5h-9l4 -7.5zM172.11 487.58l0.5 0l4 7.5h-9l4 -7.5zM174.44 489.90l0.5 0l4 7.5h-9l4 -7.5zM176.78 492.14l0.5 0l4 7.5h-9l4 -7.5zM179.11 494.29l0.5 0l4 7.5h-9l4 -7.5zM181.45 496.37l0.5 0l4 7.5h-9l4 -7.5zM183.78 498.37l0.5 0l4 7.5h-9l4 -7.5zM186.11 500.28l0.5 0l4 7.5h-9l4 -7.5zM188.45 502.11l0.5 0l4 7.5h-9l4 -7.5zM190.78 503.85l0.5 0l4 7.5h-9l4 -7.5zM193.12 505.50l0.5 0l4 7.5h-9l4 -7.5zM195.45 507.06l0.5 0l4 7.5h-9l4 -7.5zM197.79 508.53l0.5 0l4 7.5h-9l4 -7.5zM200.12 509.92l0.5 0l4 7.5h-9l4 -7.5zM202.45 511.21l0.5 0l4 7.5h-9l4 -7.5zM204.79 512.40l0.5 0l4 7.5h-9l4 -7.5zM207.12 513.51l0.5 0l4 7.5h-9l4 -7.5zM209.46 514.52l0.5 0l4 7.5h-9l4 -7.5zM211.79 515.44l0.5 0l4 7.5h-9l4 -7.5zM214.13 516.26l0.5 0l4 7.5h-9l4 -7.5zM216.46 516.99l0.5 0l4 7.5h-9l4 -7.5zM218.79 517.62l0.5 0l4 7.5h-9l4 -7.5zM221.13 518.16l0.5 0l4 7.5h-9l4 -7.5zM223.46 518.60l0.5 0l4 7.5h-9l4 -7.5zM225.80 518.95l0.5 0l4 7.5h-9l4 -7.5zM228.13 519.20l0.5 0l4 7.5h-9l4 -7.5zM230.47 519.36l0.5 0l4 7.5h-9l4 -7.5zM232.80 519.43l0.5 0l4 7.5h-9l4 -7.5zM235.13 519.41l0.5 0l4 7.5h-9l4 -7.5zM237.47 519.29l0.5 0l4 7.5h-9l4 -7.5zM239.80 519.08l0.5 0l4 7.5h-9l4 -7.5zM242.14 518.78l0.5 0l4 7.5h-9l4 -7.5zM244.47 518.39l0.5 0l4 7.5h-9l4 -7.5zM246.80 517.91l0.5 0l4 7.5h-9l4 -7.5zM249.14 517.34l0.5 0l4 7.5h-9l4 -7.5zM251.47 516.69l0.5 0l4 7.5h-9l4 -7.5zM253.81 515.95l0.5 0l4 7.5h-9l4 -7.5zM256.14 515.13l0.5 0l4 7.5h-9l4 -7.5zM258.48 514.23l0.5 0l4 7.5h-9l4 -7.5zM260.81 513.25l0.5 0l4 7.5h-9l4 -7.5zM263.14 512.18l0.5 0l4 7.5h-9l4 -7.5zM265.48 511.04l0.5 0l4 7.5h-9l4 -7.5zM267.81 509.83l0.5 0l4 7.5h-9l4 -7.5zM270.15 508.54l0.5 0l4 7.5h-9l4 -7.5zM272.48 507.18l0.5 0l4 7.5h-9l4 -7.5zM274.82 505.74l0.5 0l4 7.5h-9l4 -7.5zM277.15 504.24l0.5 0l4 7.5h-9l4 -7.5zM279.48 502.68l0.5 0l4 7.5h-9l4 -7.5zM281.82 501.05l0.5 0l4 7.5h-9l4 -7.5zM284.15 499.36l0.5 0l4 7.5h-9l4 -7.5zM286.49 497.61l0.5 0l4 7.5h-9l4 -7.5zM288.82 495.81l0.5 0l4 7.5h-9l4 -7.5zM291.16 493.94l0.5 0l4 7.5h-9l4 -7.5zM293.49 492.03l0.5 0l4 7.5h-9l4 -7.5zM295.82 490.07l0.5 0l4 7.5h-9l4 -7.5zM298.16 488.06l0.5 0l4 7.5h-9l4 -7.5zM300.49 486.01l0.5 0l4 7.5h-9l4 -7.5zM302.83 483.91l0.5 0l4 7.5h-9l4 -7.5zM305.16 481.77l0.5 0l4 7.5h-9l4 -7.5zM307.50 479.60l0.5 0l4 7.5h-9l4 -7.5zM309.83 477.40l0.5 0l4 7.5h-9l4 -7.5zM312.16 475.16l0.5 0l4 7.5h-9l4 -7.5zM314.50 472.89l0.5 0l4 7.5h-9l4 -7.5zM316.83 470.60l0.5 0l4 7.5h-9l4 -7.5zM319.17 468.28l0.5 0l4 7.5h-9l4 -7.5zM321.50 465.94l0.5 0l4 7.5h-9l4 -7.5zM323.83 463.59l0.5 0l4 7.5h-9l4 -7.5zM326.17 461.22l0.5 0l4 7.5h-9l4 -7.5zM328.50 458.84l0.5 0l4 7.5h-9l4 -7.5zM330.84 456.45l0.5 0l4 7.5h-9l4 -7.5zM333.17 454.05l0.5 0l4 7.5h-9l4 -7.5zM335.51 451.65l0.5 0l4 7.5h-9l4 -7.5zM337.84 449.25l0.5 0l4 7.5h-9l4 -7.5zM340.17 446.85l0.5 0l4 7.5h-9l4 -7.5zM342.51 444.45l0.5 0l4 7.5h-9l4 -7.5zM344.84 442.06l0.5 0l4 7.5h-9l4 -7.5zM347.18 439.68l0.5 0l4 7.5h-9l4 -7.5zM349.51 437.32l0.5 0l4 7.5h-9l4 -7.5zM351.85 434.97l0.5 0l4 7.5h-9l4 -7.5zM354.18 432.64l0.5 0l4 7.5h-9l4 -7.5zM356.51 430.33l0.5 0l4 7.5h-9l4 -7.5zM358.85 428.04l0.5 0l4 7.5h-9l4 -7.5zM361.18 425.78l0.5 0l4 7.5h-9l4 -7.5zM363.52 423.55l0.5 0l4 7.5h-9l4 -7.5zM365.85 421.35l0.5 0l4 7.5h-9l4 -7.5zM368.19 419.19l0.5 0l4 7.5h-9l4 -7.5zM370.52 417.06l0.5 0l4 7.5h-9l4 -7.5zM372.85 414.97l0.5 0l4 7.5h-9l4 -7.5zM375.19 412.92l0.5 0l4 7.5h-9l4 -7.5zM377.52 410.91l0.5 0l4 7.5h-9l4 -7.5zM379.86 408.95l0.5 0l4 7.5h-9l4 -7.5zM382.19 407.04l0.5 0l4 7.5h-9l4 -7.5zM384.53 405.18l0.5 0l4 7.5h-9l4 -7.5zM386.86 403.37l0.5 0l4 7.5h-9l4 -7.5zM389.19 401.62l0.5 0l4 7.5h-9l4 -7.5zM391.53 399.93l0.5 0l4 7.5h-9l4 -7.5zM393.86 398.29l0.5 0l4 7.5h-9l4 -7.5zM396.20 396.71l0.5 0l4 7.5h-9l4 -7.5zM398.53 395.20l0.5 0l4 7.5h-9l4 -7.5zM400.87 393.74l0.5 0l4 7.5h-9l4 -7.5zM403.20 392.36l0.5 0l4 7.5h-9l4 -7.5zM405.53 391.04l0.5 0l4 7.5h-9l4 -7.5zM407.87 389.79l0.5 0l4 7.5h-9l4 -7.5zM410.20 388.61l0.5 0l4 7.5h-9l4 -7.5zM412.54 387.51l0.5 0l4 7.5h-9l4 -7.5zM414.87 386.47l0.5 0l4 7.5h-9l4 -7.5zM417.20 385.51l0.5 0l4 7.5h-9l4 -7.5zM419.54 384.63l0.5 0l4 7.5h-9l4 -7.5zM421.87 383.82l0.5 0l4 7.5h-9l4 -7.5zM424.21 383.08l0.5 0l4 7.5h-9l4 -7.5zM426.54 382.43l0.5 0l4 7.5h-9l4 -7.5zM428.88 381.85l0.5 0l4 7.5h-9l4 -7.5zM431.21 381.35l0.5 0l4 7.5h-9l4 -7.5zM433.54 380.93l0.5 0l4 7.5h-9l4 -7.5zM435.88 380.59l0.5 0l4 7.5h-9l4 -7.5zM438.21 380.33l0.5 0l4 7.5h-9l4 -7.5zM440.55 380.15l0.5 0l4 7.5h-9l4 -7.5zM442.88 380.04l0.5 0l4 7.5h-9l4 -7.5zM445.22 380.02l0.5 0l4 7.5h-9l4 -7.5zM447.55 380.08l0.5 0l4 7.5h-9l4 -7.5zM449.88 380.21l0.5 0l4 7.5h-9l4 -7.5zM452.22 380.43l0.5 0l4 7.5h-9l4 -7.5zM454.55 380.72l0.5 0l4 7.5h-9l4 -7.5zM456.89 381.09l0.5 0l4 7.5h-9l4 -7.5zM459.22 381.53l0.5 0l4 7.5h-9l4 -7.5zM461.56 382.05l0.5 0l4 7.5h-9l4 -7.5zM463.89 382.64l0.5 0l4 7.5h-9l4 -7.5zM466.22 383.31l0.5 0l4 7.5h-9l4 -7.5zM468.56 384.05l0.5 0l4 7.5h-9l4 -7.5zM470.89 384.86l0.5 0l4 7.5h-9l4 -7.5zM473.23 385.73l0.5 0l4 7.5h-9l4 -7.5zM475.56 386.68l0.5 0l4 7.5h-9l4 -7.5zM477.90 387.69l0.5 0l4 7.5h-9l4 -7.5zM480.23 388.76l0.5 0l4 7.5h-9l4 -7.5zM482.56 389.89l0.5 0l4 7.5h-9l4 -7.5zM484.90 391.08l0.5 0l4 7.5h-9l4 -7.5zM487.23 392.33l0.5 0l4 7.5h-9l4 -7.5zM489.57 393.63l0.5 0l4 7.5h-9l4 -7.5zM491.90 394.99l0.5 0l4 7.5h-9l4 -7.5zM494.23 396.39l0.5 0l4 7.5h-9l4 -7.5zM496.57 397.84l0.5 0l4 7.5h-9l4 -7.5zM498.90 399.34l0.5 0l4 7.5h-9l4 -7.5zM501.24 400.87l0.5 0l4 7.5h-9l4 -7.5zM503.57 402.45l0.5 0l4 7.5h-9l4 -7.5zM505.91 404.06l0.5 0l4 7.5h-9l4 -7.5zM508.24 405.70l0.5 0l4 7.5h-9l4 -7.5zM510.57 407.38l0.5 0l4 7.5h-9l4 -7.5zM512.91 409.08l0.5 0l4 7.5h-9l4 -7.5zM515.24 410.80l0.5 0l4 7.5h-9l4 -7.5zM517.58 412.54l0.5 0l4 7.5h-9l4 -7.5zM519.91 414.30l0.5 0l4 7.5h-9l4 -7.5zM522.25 416.07l0.5 0l4 7.5h-9l4 -7.5zM524.58 417.86l0.5 0l4 7.5h-9l4 -7.5zM526.91 419.64l0.5 0l4 7.5h-9l4 -7.5zM529.25 421.44l0.5 0l4 7.5h-9l4 -7.5zM531.58 423.23l0.5 0l4 7.5h-9l4 -7.5zM533.92 425.02l0.5 0l4 7.5h-9l4 -7.5zM536.25 426.80l0.5 0l4 7.5h-9l4 -7.5zM538.59 428.57l0.5 0l4 7.5h-9l4 -7.5zM540.92 430.33l0.5 0l4 7.5h-9l4 -7.5zM543.25 432.07l0.5 0l4 7.5h-9l4 -7.5zM545.59 433.80l0.5 0l4 7.5h-9l4 -7.5zM547.92 435.49l0.5 0l4 7.5h-9l4 -7.5zM550.26 437.17l0.5 0l4 7.5h-9l4 -7.5zM552.59 438.81l0.5 0l4 7.5h-9l4 -7.5zM554.93 440.42l0.5 0l4 7.5h-9l4 -7.5zM557.26 441.99l0.5 0l4 7.5h-9l4 -7.5zM559.59 443.52l0.5 0l4 7.5h-9l4 -7.5zM561.93 445.01l0.5 0l4 7.5h-9l4 -7.5zM564.26 446.46l0.5 0l4 7.5h-9l4 -7.5zM566.60 447.85l0.5 0l4 7.5h-9l4 -7.5zM568.93 449.20l0.5 0l4 7.5h-9l4 -7.5zM571.27 450.49l0.5 0l4 7.5h-9l4 -7.5zM573.60 451.73l0.5 0l4 7.5h-9l4 -7.5zM575.93 452.91l0.5 0l4 7.5h-9l4 -7.5zM578.27 454.03l0.5 0l4 7.5h-9l4 -7.5zM580.60 455.08l0.5 0l4 7.5h-9l4 -7.5zM582.94 456.07l0.5 0l4 7.5h-9l4 -7.5zM585.27 456.99l0.5 0l4 7.5h-9l4 -7.5zM587.60 457.85l0.5 0l4 7.5h-9l4 -7.5zM589.94 458.63l0.5 0l4 7.5h-9l4 -7.5zM592.27 459.34l0.5 0l4 7.5h-9l4 -7.5zM594.61 459.97l0.5 0l4 7.5h-9l4 -7.5zM596.94 460.53l0.5 0l4 7.5h-9l4 -7.5zM599.28 461.01l0.5 0l4 7.5h-9l4 -7.5zM601.61 461.41l0.5 0l4 7.5h-9l4 -7.5zM603.94 461.74l0.5 0l4 7.5h-9l4 -7.5zM606.28 461.98l0.5 0l4 7.5h-9l4 -7.5zM608.61 462.14l0.5 0l4 7.5h-9l4 -7.5zM610.95 462.21l0.5 0l4 7.5h-9l4 -7.5zM613.28 462.21l0.5 0l4 7.5h-9l4 -7.5zM615.62 462.12l0.5 0l4 7.5h-9l4 -7.5zM617.95 461.94l0.5 0l4 7.5h-9l4 -7.5zM620.28 461.69l0.5 0l4 7.5h-9l4 -7.5zM622.62 461.34l0.5 0l4 7.5h-9l4 -7.5zM624.95 460.91l0.5 0l4 7.5h-9l4 -7.5zM627.29 460.40l0.5 0l4 7.5h-9l4 -7.5zM629.62 459.81l0.5 0l4 7.5h-9l4 -7.5zM631.96 459.12l0.5 0l4 7.5h-9l4 -7.5zM634.29 458.36l0.5 0l4 7.5h-9l4 -7.5zM636.62 457.51l0.5 0l4 7.5h-9l4 -7.5zM638.96 456.58l0.5 0l4 7.5h-9l4 -7.5zM641.29 455.57l0.5 0l4 7.5h-9l4 -7.5zM643.63 454.47l0.5 0l4 7.5h-9l4 -7.5zM645.96 453.30l0.5 0l4 7.5h-9l4 -7.5zM648.30 452.04l0.5 0l4 7.5h-9l4 -7.5zM650.63 450.71l0.5 0l4 7.5h-9l4 -7.5zM652.96 449.30l0.5 0l4 7.5h-9l4 -7.5zM655.30 447.82l0.5 0l4 7.5h-9l4 -7.5zM657.63 446.26l0.5 0l4 7.5h-9l4 -7.5zM659.97 444.63l0.5 0l4 7.5h-9l4 -7.5zM662.30 442.92l0.5 0l4 7.5h-9l4 -7.5zM664.63 441.15l0.5 0l4 7.5h-9l4 -7.5zM666.97 439.31l0.5 0l4 7.5h-9l4 -7.5zM669.30 437.40l0.5 0l4 7.5h-9l4 -7.5zM671.64 435.43l0.5 0l4 7.5h-9l4 -7.5zM673.97 433.40l0.5 0l4 7.5h-9l4 -7.5zM676.31 431.31l0.5 0l4 7.5h-9l4 -7.5zM678.64 429.16l0.5 0l4 7.5h-9l4 -7.5zM680.97 426.95l0.5 0l4 7.5h-9l4 -7.5zM683.31 424.69l0.5 0l4 7.5h-9l4 -7.5zM685.64 422.38l0.5 0l4 7.5h-9l4 -7.5zM687.98 420.02l0.5 0l4 7.5h-9l4 -7.5zM690.31 417.61l0.5 0l4 7.5h-9l4 -7.5zM692.65 415.16l0.5 0l4 7.5h-9l4 -7.5zM694.98 412.67l0.5 0l4 7.5h-9l4 -7.5zM697.31 410.14l0.5 0l4 7.5h-9l4 -7.5zM699.65 407.57l0.5 0l4 7.5h-9l4 -7.5zM701.98 404.96l0.5 0l4 7.5h-9l4 -7.5zM704.32 402.33l0.5 0l4 7.5h-9l4 -7.5zM706.65 399.66l0.5 0l4 7.5h-9l4 -7.5zM708.99 396.98l0.5 0l4 7.5h-9l4 -7.5zM711.32 394.26l0.5 0l4 7.5h-9l4 -7.5zM713.65 391.53l0.5 0l4 7.5h-9l4 -7.5zM715.99 388.78l0.5 0l4 7.5h-9l4 -7.5zM718.32 386.01l0.5 0l4 7.5h-9l4 -7.5zM720.66 383.23l0.5 0l4 7.5h-9l4 -7.5zM722.99 380.45l0.5 0l4 7.5h-9l4 -7.5zM725.33 377.65l0.5 0l4 7.5h-9l4 -7.5zM727.66 374.86l0.5 0l4 7.5h-9l4 -7.5zM729.99 372.06l0.5 0l4 7.5h-9l4 -7.5zM732.33 369.26l0.5 0l4 7.5h-9l4 -7.5zM734.66 366.47l0.5 0l4 7.5h-9l4 -7.5zM737.00 363.69l0.5 0l4 7.5h-9l4 -7.5zM739.33 360.92l0.5 0l4 7.5h-9l4 -7.5zM741.67 358.16l0.5 0l4 7.5h-9l4 -7.5zM744.00 355.42l0.5 0l4 7.5h-9l4 -7.5zM746.33 352.69l0.5 0l4 7.5h-9l4 -7.5zM748.67 349.99l0.5 0l4 7.5h-9l4 -7.5zM751.00 347.32l0.5 0l4 7.5h-9l4 -7.5zM753.34 344.67l0.5 0l4 7.5h-9l4 -7.5zM755.67 342.06l0.5 0l4 7.5h-9l4 -7.5zM758.00 339.48l0.5 0l4 7.5h-9l4 -7.5zM760.34 336.93l0.5 0l4 7.5h-9l4 -7.5zM762.67 334.42l0.5 0l4 7.5h-9l4 -7.5zM765.01 331.96l0.5 0l4 7.5h-9l4 -7.5zM767.34 329.54l0.5 0l4 7.5h-9l4 -7.5zM769.68 327.17l0.5 0l4 7.5h-9l4 -7.5zM772.01 324.84l0.5 0l4 7.5h-9l4 -7.5zM774.34 322.57l0.5 0l4 7.5h-9l4 -7.5zM776.68 320.36l0.5 0l4 7.5h-9l4 -7.5zM779.01 318.20l0.5 0l4 7.5h-9l4 -7.5zM781.35 316.10l0.5 0l4 7.5h-9l4 -7.5zM783.68 314.06l0.5 0l4 7.5h-9l4 -7.5zM786.02 312.09l0.5 0l4 7.5h-9l4 -7.5zM788.35 310.18l0.5 0l4 7.5h-9l4 -7.5zM790.68 308.34l0.5 0l4 7.5h-9l4 -7.5zM793.02 306.58l0.5 0l4 7.5h-9l4 -7.5zM795.35 304.89l0.5 0l4 7.5h-9l4 -7.5zM797.69 303.27l0.5 0l4 7.5h-9l4 -7.5zM800.02 301.73l0.5 0l4 7.5h-9l4 -7.5zM802.36 300.27l0.5 0l4 7.5h-9l4 -7.5zM804.69 298.89l0.5 0l4 7.5h-9l4 -7.5zM807.02 297.59l0.5 0l4 7.5h-9l4 -7.5zM809.36 296.37l0.5 0l4 7.5h-9l4 -7.5zM811.69 295.25l0.5 0l4 7.5h-9l4 -7.5zM814.03 294.21l0.5 0l4 7.5h-9l4 -7.5zM816.36 293.26l0.5 0l4 7.5h-9l4 -7.5zM818.70 292.39l0.5 0l4 7.5h-9l4 -7.5zM821.03 291.62l0.5 0l4 7.5h-9l4 -7.5zM823.36 290.95l0.5 0l4 7.5h-9l4 -7.5zM825.70 290.36l0.5 0l4 7.5h-9l4 -7.5zM828.03 289.88l0.5 0l4 7.5h-9l4 -7.5zM830.37 289.48l0.5 0l4 7.5h-9l4 -7.5zM832.70 289.19l0.5 0l4 7.5h-9l4 -7.5zM835.03 288.99l0.5 0l4 7.5h-9l4 -7.5zM837.37 288.89l0.5 0l4 7.5h-9l4 -7.5zM839.70 288.88l0.5 0l4 7.5h-9l4 -7.5zM842.04 288.98l0.5 0l4 7.5h-9l4 -7.5zM844.37 289.17l0.5 0l4 7.5h-9l4 -7.5zM846.71 289.47l0.5 0l4 7.5h-9l4 -7.5zM849.04 289.86l0.5 0l4 7.5h-9l4 -7.5zM851.37 290.35l0.5 0l4 7.5h-9l4 -7.5zM853.71 290.94l0.5 0l4 7.5h-9l4 -7.5zM856.04 291.63l0.5 0l4 7.5h-9l4 -7.5zM858.38 292.42l0.5 0l4 7.5h-9l4 -7.5zM860.71 293.31l0.5 0l4 7.5h-9l4 -7.5zM863.05 294.30l0.5 0l4 7.5h-9l4 -7.5zM865.38 295.38l0.5 0l4 7.5h-9l4 -7.5zM867.71 296.56l0.5 0l4 7.5h-9l4 -7.5zM870.05 297.84l0.5 0l4 7.5h-9l4 -7.5zM872.38 299.21l0.5 0l4 7.5h-9l4 -7.5zM874.72 300.67l0.5 0l4 7.5h-9l4 -7.5zM877.05 302.23l0.5 0l4 7.5h-9l4 -7.5zM879.39 303.88l0.5 0l4 7.5h-9l4 -7.5zM881.72 305.62l0.5 0l4 7.5h-9l4 -7.5zM884.05 307.45l0.5 0l4 7.5h-9l4 -7.5zM886.39 309.36l0.5 0l4 7.5h-9l4 -7.5zM888.72 311.37l0.5 0l4 7.5h-9l4 -7.5zM891.06 313.45l0.5 0l4 7.5h-9l4 -7.5zM893.39 315.62l0.5 0l4 7.5h-9l4 -7.5zM895.73 317.87l0.5 0l4 7.5h-9l4 -7.5zM898.06 320.19l0.5 0l4 7.5h-9l4 -7.5zM900.39 322.60l0.5 0l4 7.5h-9l4 -7.5zM902.73 325.07l0.5 0l4 7.5h-9l4 -7.5zM905.06 327.62l0.5 0l4 7.5h-9l4 -7.5zM907.40 330.24l0.5 0l4 7.5h-9l4 -7.5zM909.73 332.93l0.5 0l4 7.5h-9l4 -7.5zM912.07 335.68l0.5 0l4 7.5h-9l4 -7.5zM914.40 338.50l0.5 0l4 7.5h-9l4 -7.5zM916.73 341.37l0.5 0l4 7.5h-9l4 -7.5zM919.07 344.31l0.5 0l4 7.5h-9l4 -7.5zM921.40 347.29l0.5 0l4 7.5h-9l4 -7.5zM923.74 350.33l0.5 0l4 7.5h-9l4 -7.5zM926.07 353.42l0.5 0l4 7.5h-9l4 -7.5zM928.40 356.56l0.5 0l4 7.5h-9l4 -7.5zM930.74 359.74l0.5 0l4 7.5h-9l4 -7.5zM933.07 362.96l0.5 0l4 7.5h-9l4 -7.5zM935.41 366.21l0.5 0l4 7.5h-9l4 -7.5zM937.74 369.50l0.5 0l4 7.5h-9l4 -7.5zM940.08 372.83l0.5 0l4 7.5h-9l4 -7.5zM942.41 376.18l0.5 0l4 7.5h-9l4 -7.5zM944.74 379.55l0.5 0l4 7.5h-9l4 -7.5zM947.08 382.95l0.5 0l4 7.5h-9l4 -7.5zM949.41 386.37l0.5 0l4 7.5h-9l4 -7.5zM951.75 389.80l0.5 0l4 7.5h-9l4 -7.5zM954.08 393.25l0.5 0l4 7.5h-9l4 -7.5zM956.42 396.71l0.5 0l4 7.5h-9l4 -7.5z" fill="#ffff00"/><path d="M103.00 403.88h8v8h-8zM105.33 406.00h8v8h-8zM107.67 408.12h8v8h-8zM110.00 410.23h8v8h-8zM112.34 412.34h8v8h-8zM114.67 414.45h8v8h-8zM117.01 416.54h8v8h-8zM119.34 418.63h8v8h-8zM121.67 420.70h8v8h-8zM124.01 422.77h8v8h-8zM126.34 424.81h8v8h-8zM128.68 427.32h8v8h-8zM131.01 429.33h8v8h-8zM133.35 431.31h8v8h-8zM135.68 433.27h8v8h-8zM138.01 435.20h8v8h-8zM140.35 437.11h8v8h-8zM142.68 438.99h8v8h-8zM145.02 440.83h8v8h-8zM147.35 442.65h8v8h-8zM149.68 444.43h8v8h-8zM152.02 446.17h8v8h-8zM154.35 447.88h8v8h-8zM156.69 449.55h8v8h-8zM159.02 451.19h8v8h-8zM161.36 452.78h8v8h-8zM163.69 454.32h8v8h-8zM166.02 455.83h8v8h-8zM168.36 457.28h8v8h-8zM170.69 458.70h8v8h-8zM173.03 460.06h8v8h-8zM175.36 461.37h8v8h-8zM177.70 462.64h8v8h-8zM180.03 463.85h8v8h-8zM182.36 465.02h8v8h-8zM184.70 466.13h8v8h-8zM187.03 467.18h8v8h-8zM189.37 468.18h8v8h-8zM191.70 469.13h8v8h-8zM194.04 470.02h8v8h-8zM196.37 470.86h8v8h-8zM198.70 471.64h8v8h-8zM201.04 472.36h8v8h-8zM203.37 473.02h8v8h-8zM205.71 473.63h8v8h-8zM208.04 474.17h8v8h-8zM210.38 474.66h8v8h-8zM212.71 475.09h8v8h-8zM215.04 475.46h8v8h-8zM217.38 475.77h8v8h-8zM219.71 476.03h8v8h-8zM222.05 476.22h8v8h-8zM224.38 476.36h8v8h-8zM226.72 476.44h8v8h-8zM229.05 476.46h8v8h-8zM231.38 476.42h8v8h-8zM233.72 476.33h8v8h-8zM236.05 476.17h8v8h-8zM238.39 475.97h8v8h-8zM240.72 475.71h8v8h-8zM243.05 475.39h8v8h-8zM245.39 475.02h8v8h-8zM247.72 474.59h8v8h-8zM250.06 474.12h8v8h-8zM252.39 473.59h8v8h-8zM254.73 473.01h8v8h-8zM257.06 472.38h8v8h-8zM259.39 471.71h8v8h-8zM261.73 470.98h8v8h-8zM264.06 470.21h8v8h-8zM266.40 469.40h8v8h-8zM268.73 468.54h8v8h-8zM271.07 467.64h8v8h-8zM273.40 466.70h8v8h-8zM275.73 465.72h8v8h-8zM278.07 464.70h8v8h-8zM280.40 463.64h8v8h-8zM282.74 462.55h8v8h-8zM285.07 461.43h8v8h-8zM287.41 460.27h8v8h-8zM289.74 459.08h8v8h-8zM292.07 457.87h8v8h-8zM294.41 456.62h8v8h-8zM296.74 455.35h8v8h-8zM299.08 454.06h8v8h-8zM301.41 452.75h8v8h-8zM303.75 451.41h8v8h-8zM306.08 450.06h8v8h-8zM308.41 448.68h8v8h-8zM310.75 447.30h8v8h-8zM313.08 445.90h8v8h-8zM315.42 444.49h8v8h-8zM317.75 443.06h8v8h-8zM320.08 441.63h8v8h-8zM322.42 440.20h8v8h-8zM324.75 438.76h8v8h-8zM327.09 437.31h8v8h-8zM329.42 435.87h8v8h-8zM331.76 434.42h8v8h-8zM334.09 432.98h8v8h-8zM336.42 431.54h8v8h-8zM338.76 430.11h8v8h-8zM341.09 428.69h8v8h-8zM343.43 427.27h8v8h-8zM345.76 425.87h8v8h-8zM348.10 424.48h8v8h-8zM350.43 423.10h8v8h-8zM352.76 421.74h8v8h-8zM355.10 420.40h8v8h-8zM357.43 419.07h8v8h-8zM359.77 417.77h8v8h-8zM362.10 416.48h8v8h-8zM364.44 415.23h8v8h-8zM366.77 413.99h8v8h-8zM369.10 412.78h8v8h-8zM371.44 411.60h8v8h-8zM373.77 410.45h8v8h-8zM376.11 409.33h8v8h-8zM378.44 408.24h8v8h-8zM380.78 407.18h8v8h-8zM383.11 406.15h8v8h-8zM385.44 405.16h8v8h-8zM387.78 404.21h8v8h-8zM390.11 403.29h8v8h-8zM392.45 402.41h8v8h-8zM394.78 401.56h8v8h-8zM397.12 400.76h8v8h-8zM399.45 400.00h8v8h-8zM401.78 399.27h8v8h-8zM404.12 398.59h8v8h-8zM406.45 397.95h8v8h-8zM408.79 397.35h8v8h-8zM411.12 396.79h8v8h-8zM413.45 396.28h8v8h-8zM415.79 395.81h8v8h-8zM418.12 395.38h8v8h-8zM420.46 395.00h8v8h-8zM422.79 394.66h8v8h-8zM425.13 394.37h8v8h-8zM427.46 394.12h8v8h-8zM429.79 393.92h8v8h-8zM432.13 393.76h8v8h-8zM434.46 393.64h8v8h-8zM436.80 393.57h8v8h-8zM439.13 393.54h8v8h-8zM441.47 393.55h8v8h-8zM443.80 393.61h8v8h-8zM446.13 393.71h8v8h-8zM448.47 393.85h8v8h-8zM450.80 394.03h8v8h-8zM453.14 394.25h8v8h-8zM455.47 394.52h8v8h-8zM457.81 394.82h8v8h-8zM460.14 395.16h8v8h-8zM462.47 395.55h8v8h-8zM464.81 395.96h8v8h-8zM467.14 396.42h8v8h-8zM469.48 396.91h8v8h-8zM471.81 397.43h8v8h-8zM474.15 397.98h8v8h-8zM476.48 398.57h8v8h-8zM478.81 399.19h8v8h-8zM481.15 399.84h8v8h-8zM483.48 400.52h8v8h-8zM485.82 401.23h8v8h-8zM488.15 401.96h8v8h-8zM490.48 402.71h8v8h-8zM492.82 403.49h8v8h-8zM495.15 404.29h8v8h-8zM497.49 405.11h8v8h-8zM499.82 405.96h8v8h-8zM502.16 406.81h8v8h-8zM504.49 407.69h8v8h-8zM506.82 408.58h8v8h-8zM509.16 409.48h8v8h-8zM511.49 410.39h8v8h-8zM513.83 411.32h8v8h-8zM516.16 412.25h8v8h-8zM518.50 413.19h8v8h-8zM520.83 414.13h8v8h-8zM523.16 415.08h8v8h-8zM525.50 416.03h8v8h-8zM527.83 416.97h8v8h-8zM530.17 417.92h8v8h-8zM532.50 418.87h8v8h-8zM534.84 419.80h8v8h-8zM537.17 420.74h8v8h-8zM539.50 421.66h8v8h-8zM541.84 422.58h8v8h-8zM544.17 423.48h8v8h-8zM546.51 424.37h8v8h-8zM548.84 425.25h8v8h-8zM551.18 426.11h8v8h-8zM553.51 426.95h8v8h-8zM555.84 427.78h8v8h-8zM558.18 428.58h8v8h-8zM560.51 429.36h8v8h-8zM562.85 430.12h8v8h-8zM565.18 430.85h8v8h-8zM567.52 431.56h8v8h-8zM569.85 432.24h8v8h-8zM572.18 432.89h8v8h-8zM574.52 433.51h8v8h-8zM576.85 434.10h8v8h-8zM579.19 434.65h8v8h-8zM581.52 435.17h8v8h-8zM583.85 435.66h8v8h-8zM586.19 436.11h8v8h-8zM588.52 436.52h8v8h-8zM590.86 436.90h8v8h-8zM593.19 437.23h8v8h-8zM595.53 437.53h8v8h-8zM597.86 437.78h8v8h-8zM600.19 437.99h8v8h-8zM602.53 438.16h8v8h-8zM604.86 438.29h8v8h-8zM607.20 438.37h8v8h-8zM609.53 438.41h8v8h-8zM611.87 438.40h8v8h-8zM614.20 438.35h8v8h-8zM616.53 438.25h8v8h-8zM618.87 438.11h8v8h-8zM621.20 437.92h8v8h-8zM623.54 437.68h8v8h-8zM625.87 437.39h8v8h-8zM628.21 437.06h8v8h-8zM630.54 436.68h8v8h-8zM632.87 436.25h8v8h-8zM635.21 435.78h8v8h-8zM637.54 435.26h8v8h-8zM639.88 434.69h8v8h-8zM642.21 434.08h8v8h-8zM644.55 433.42h8v8h-8zM646.88 432.71h8v8h-8zM649.21 431.96h8v8h-8zM651.55 431.16h8v8h-8zM653.88 430.32h8v8h-8zM656.22 429.43h8v8h-8zM658.55 428.50h8v8h-8zM660.88 427.53h8v8h-8zM663.22 426.52h8v8h-8zM665.55 425.47h8v8h-8zM667.89 424.37h8v8h-8zM670.22 423.24h8v8h-8zM672.56 422.07h8v8h-8zM674.89 420.86h8v8h-8zM677.22 419.62h8v8h-8zM679.56 418.34h8v8h-8zM681.89 417.02h8v8h-8zM684.23 415.68h8v8h-8zM686.56 414.30h8v8h-8zM688.90 412.90h8v8h-8zM691.23 411.46h8v8h-8zM693.56 410.00h8v8h-8zM695.90 408.51h8v8h-8zM698.23 407.00h8v8h-8zM700.57 405.47h8v8h-8zM702.90 403.91h8v8h-8zM705.24 402.34h8v8h-8zM707.57 400.75h8v8h-8zM709.90 399.14h8v8h-8zM712.24 397.51h8v8h-8zM714.57 395.88h8v8h-8zM716.91 394.23h8v8h-8zM719.24 392.58h8v8h-8zM721.58 390.91h8v8h-8zM723.91 389.24h8v8h-8zM726.24 387.57h8v8h-8zM728.58 385.89h8v8h-8zM730.91 384.21h8v8h-8zM733.25 382.54h8v8h-8zM735.58 380.87h8v8h-8zM737.92 379.20h8v8h-8zM740.25 377.54h8v8h-8zM742.58 375.89h8v8h-8zM744.92 374.25h8v8h-8zM747.25 372.62h8v8h-8zM749.59 371.01h8v8h-8zM751.92 369.41h8v8h-8zM754.25 367.83h8v8h-8zM756.59 366.27h8v8h-8zM758.92 364.73h8v8h-8zM761.26 363.21h8v8h-8zM763.59 361.72h8v8h-8zM765.93 360.26h8v8h-8zM768.26 358.82h8v8h-8zM770.59 357.42h8v8h-8zM772.93 356.05h8v8h-8zM775.26 354.71h8v8h-8zM777.60 353.40h8v8h-8zM779.93 352.13h8v8h-8zM782.27 350.91h8v8h-8zM784.60 349.72h8v8h-8zM786.93 348.57h8v8h-8zM789.27 347.46h8v8h-8zM791.60 346.40h8v8h-8zM793.94 345.39h8v8h-8zM796.27 344.42h8v8h-8zM798.61 343.50h8v8h-8zM800.94 342.63h8v8h-8zM803.27 341.81h8v8h-8zM805.61 341.04h8v8h-8zM807.94 340.32h8v8h-8zM810.28 339.66h8v8h-8zM812.61 339.05h8v8h-8zM814.95 338.50h8v8h-8zM817.28 338.00h8v8h-8zM819.61 337.56h8v8h-8zM821.95 337.18h8v8h-8zM824.28 336.86h8v8h-8zM826.62 336.59h8v8h-8zM828.95 336.39h8v8h-8zM831.28 336.25h8v8h-8zM833.62 336.16h8v8h-8zM835.95 336.14h8v8h-8zM838.29 336.18h8v8h-8zM840.62 336.28h8v8h-8zM842.96 336.44h8v8h-8zM845.29 336.66h8v8h-8zM847.62 336.95h8v8h-8zM849.96 337.30h8v8h-8zM852.29 337.70h8v8h-8zM854.63 338.17h8v8h-8zM856.96 338.70h8v8h-8zM859.30 339.29h8v8h-8zM861.63 339.94h8v8h-8zM863.96 340.66h8v8h-8zM866.30 341.43h8v8h-8zM868.63 342.25h8v8h-8zM870.97 343.14h8v8h-8zM873.30 344.09h8v8h-8zM875.64 345.09h8v8h-8zM877.97 346.14h8v8h-8zM880.30 347.26h8v8h-8zM882.64 348.42h8v8h-8zM884.97 349.64h8v8h-8zM887.31 350.91h8v8h-8zM889.64 352.23h8v8h-8zM891.98 353.60h8v8h-8zM894.31 355.02h8v8h-8zM896.64 356.49h8v8h-8zM898.98 358.00h8v8h-8zM901.31 359.56h8v8h-8zM903.65 361.16h8v8h-8zM905.98 362.80h8v8h-8zM908.32 364.48h8v8h-8zM910.65 366.20h8v8h-8zM912.98 367.95h8v8h-8zM915.32 369.74h8v8h-8zM917.65 371.57h8v8h-8zM919.99 373.43h8v8h-8zM922.32 375.31h8v8h-8zM924.65 377.23h8v8h-8zM926.99 379.17h8v8h-8zM929.32 381.14h8v8h-8zM931.66 383.13h8v8h-8zM933.99 385.14h8v8h-8zM936.33 387.17h8v8h-8zM938.66 389.22h8v8h-8zM940.99 391.28h8v8h-8zM943.33 393.36h8v8h-8zM945.66 395.45h8v8h-8zM948.00 397.55h8v8h-8zM950.33 399.65h8v8h-8zM952.67 401.77h8v8h-8z" fill="#ff00ff"/><path d="M107.00 407.29l3.7 3.7l-3.7 3.7l-3.7 -3.7zM109.33 408.44l3.7 3.7l-3.7 3.7l-3.7 -3.7zM111.67 409.60l3.7 3.7l-3.7 3.7l-3.7 -3.7zM114.00 410.75l3.7 3.7l-3.7 3.7l-3.7 -3.7zM116.34 411.90l3.7 3.7l-3.7 3.7l-3.7 -3.7zM118.67 413.05l3.7 3.7l-3.7 3.7l-3.7 -3.7zM121.01 414.20l3.7 3.7l-3.7 3.7l-3.7 -3.7zM123.34 415.33l3.7 3.7l-3.7 3.7l-3.7 -3.7zM125.67 416.47l3.7 3.7l-3.7 3.7l-3.7 -3.7zM128.01 417.59l3.7 3.7l-3.7 3.7l-3.7 -3.7zM130.34 418.71l3.7 3.7l-3.7 3.7l-3.7 -3.7zM132.68 420.08l3.7 3.7l-3.7 3.7l-3.7 -3.7zM135.01 421.17l3.7 3.7l-3.7 3.7l-3.7 -3.7zM137.35 422.25l3.7 3.7l-3.7 3.7l-3.7 -3.7zM139.68 423.32l3.7 3.7l-3.7 3.7l-3.7 -3.7zM142.01 424.38l3.7 3.7l-3.7 3.7l-3.7 -3.7zM144.35 425.42l3.7 3.7l-3.7 3.7l-3.7 -3.7zM146.68 426.44l3.7 3.7l-3.7 3.7l-3.7 -3.7zM149.02 427.45l3.7 3.7l-3.7 3.7l-3.7 -3.7zM151.35 428.44l3.7 3.7l-3.7 3.7l-3.7 -3.7zM153.68 429.41l3.7 3.7l-3.7 3.7l-3.7 -3.7zM156.02 430.37l3.7 3.7l-3.7 3.7l-3.7 -3.7zM158.35 431.30l3.7 3.7l-3.7 3.7l-3.7 -3.7zM160.69 432.21l3.7 3.7l-3.7 3.7l-3.7 -3.7zM163.02 433.11l3.7 3.7l-3.7 3.7l-3.7 -3.7zM165.36 433.98l3.7 3.7l-3.7 3.7l-3.7 -3.7zM167.69 434.82l3.7 3.7l-3.7 3.7l-3.7 -3.7zM170.02 435.65l3.7 3.7l-3.7 3.7l-3.7 -3.7zM172.36 436.45l3.7 3.7l-3.7 3.7l-3.7 -3.7zM174.69 437.22l3.7 3.7l-3.7 3.7l-3.7 -3.7zM177.03 437.97l3.7 3.7l-3.7 3.7l-3.7 -3.7zM179.36 438.70l3.7 3.7l-3.7 3.7l-3.7 -3.7zM181.70 439.39l3.7 3.7l-3.7 3.7l-3.7 -3.7zM184.03 440.06l3.7 3.7l-3.7 3.7l-3.7 -3.7zM186.36 440.71l3.7 3.7l-3.7 3.7l-3.7 -3.7zM188.70 441.32l3.7 3.7l-3.7 3.7l-3.7 -3.7zM191.03 441.91l3.7 3.7l-3.7 3.7l-3.7 -3.7zM193.37 442.47l3.7 3.7l-3.7 3.7l-3.7 -3.7zM195.70 443.00l3.7 3.7l-3.7 3.7l-3.7 -3.7zM198.04 443.50l3.7 3.7l-3.7 3.7l-3.7 -3.7zM200.37 443.97l3.7 3.7l-3.7 3.7l-3.7 -3.7zM202.70 444.41l3.7 3.7l-3.7 3.7l-3.7 -3.7zM205.04 444.82l3.7 3.7l-3.7 3.7l-3.7 -3.7zM207.37 445.20l3.7 3.7l-3.7 3.7l-3.7 -3.7zM209.71 445.55l3.7 3.7l-3.7 3.7l-3.7 -3.7zM212.04 445.87l3.7 3.7l-3.7 3.7l-3.7 -3.7zM214.38 446.16l3.7 3.7l-3.7 3.7l-3.7 -3.7zM216.71 446.42l3.7 3.7l-3.7 3.7l-3.7 -3.7zM219.04 446.65l3.7 3.7l-3.7 3.7l-3.7 -3.7zM221.38 446.85l3.7 3.7l-3.7 3.7l-3.7 -3.7zM223.71 447.02l3.7 3.7l-3.7 3.7l-3.7 -3.7zM226.05 447.15l3.7 3.7l-3.7 3.7l-3.7 -3.7zM228.38 447.26l3.7 3.7l-3.7 3.7l-3.7 -3.7zM230.72 447.33l3.7 3.7l-3.7 3.7l-3.7 -3.7zM233.05 447.38l3.7 3.7l-3.7 3.7l-3.7 -3.7zM235.38 447.39l3.7 3.7l-3.7 3.7l-3.7 -3.7zM237.72 447.38l3.7 3.7l-3.7 3.7l-3.7 -3.7zM240.05 447.33l3.7 3.7l-3.7 3.7l-3.7 -3.7zM242.39 447.26l3.7 3.7l-3.7 3.7l-3.7 -3.7zM244.72 447.15l3.7 3.7l-3.7 3.7l-3.7 -3.7zM247.05 447.02l3.7 3.7l-3.7 3.7l-3.7 -3.7zM249.39 446.86l3.7 3.7l-3.7 3.7l-3.7 -3.7zM251.72 446.67l3.7 3.7l-3.7 3.7l-3.7 -3.7zM254.06 446.45l3.7 3.7l-3.7 3.7l-3.7 -3.7zM256.39 446.21l3.7 3.7l-3.7 3.7l-3.7 -3.7zM258.73 445.94l3.7 3.7l-3.7 3.7l-3.7 -3.7zM261.06 445.64l3.7 3.7l-3.7 3.7l-3.7 -3.7zM263.39 445.31l3.7 3.7l-3.7 3.7l-3.7 -3.7zM265.73 444.96l3.7 3.7l-3.7 3.7l-3.7 -3.7zM268.06 444.59l3.7 3.7l-3.7 3.7l-3.7 -3.7zM270.40 444.18l3.7 3.7l-3.7 3.7l-3.7 -3.7zM272.73 443.76l3.7 3.7l-3.7 3.7l-3.7 -3.7zM275.07 443.31l3.7 3.7l-3.7 3.7l-3.7 -3.7zM277.40 442.84l3.7 3.7l-3.7 3.7l-3.7 -3.7zM279.73 442.34l3.7 3.7l-3.7 3.7l-3.7 -3.7zM282.07 441.83l3.7 3.7l-3.7 3.7l-3.7 -3.7zM284.40 441.29l3.7 3.7l-3.7 3.7l-3.7 -3.7zM286.74 440.73l3.7 3.7l-3.7 3.7l-3.7 -3.7zM289.07 440.15l3.7 3.7l-3.7 3.7l-3.7 -3.7zM291.41 439.55l3.7 3.7l-3.7 3.7l-3.7 -3.7zM293.74 438.93l3.7 3.7l-3.7 3.7l-3.7 -3.7zM296.07 438.30l3.7 3.7l-3.7 3.7l-3.7 -3.7zM298.41 437.64l3.7 3.7l-3.7 3.7l-3.7 -3.7zM300.74 436.97l3.7 3.7l-3.7 3.7l-3.7 -3.7zM303.08 436.29l3.7 3.7l-3.7 3.7l-3.7 -3.7zM305.41 435.59l3.7 3.7l-3.7 3.7l-3.7 -3.7zM307.75 434.87l3.7 3.7l-3.7 3.7l-3.7 -3.7zM310.08 434.14l3.7 3.7l-3.7 3.7l-3.7 -3.7zM312.41 433.40l3.7 3.7l-3.7 3.7l-3.7 -3.7zM314.75 432.65l3.7 3.7l-3.7 3.7l-3.7 -3.7zM317.08 431.88l3.7 3.7l-3.7 3.7l-3.7 -3.7zM319.42 431.11l3.7 3.7l-3.7 3.7l-3.7 -3.7zM321.75 430.32l3.7 3.7l-3.7 3.7l-3.7 -3.7zM324.08 429.53l3.7 3.7l-3.7 3.7l-3.7 -3.7zM326.42 428.72l3.7 3.7l-3.7 3.7l-3.7 -3.7zM328.75 427.91l3.7 3.7l-3.7 3.7l-3.7 -3.7zM331.09 427.10l3.7 3.7l-3.7 3.7l-3.7 -3.7zM333.42 426.28l3.7 3.7l-3.7 3.7l-3.7 -3.7zM335.76 425.45l3.7 3.7l-3.7 3.7l-3.7 -3.7zM338.09 424.62l3.7 3.7l-3.7 3.7l-3.7 -3.7zM340.42 423.79l3.7 3.7l-3.7 3.7l-3.7 -3.7zM342.76 422.96l3.7 3.7l-3.7 3.7l-3.7 -3.7zM345.09 422.12l3.7 3.7l-3.7 3.7l-3.7 -3.7zM347.43 421.29l3.7 3.7l-3.7 3.7l-3.7 -3.7zM349.76 420.45l3.7 3.7l-3.7 3.7l-3.7 -3.7zM352.10 419.62l3.7 3.7l-3.7 3.7l-3.7 -3.7zM354.43 418.79l3.7 3.7l-3.7 3.7l-3.7 -3.7zM356.76 417.97l3.7 3.7l-3.7 3.7l-3.7 -3.7zM359.10 417.15l3.7 3.7l-3.7 3.7l-3.7 -3.7zM361.43 416.33l3.7 3.7l-3.7 3.7l-3.7 -3.7zM363.77 415.52l3.7 3.7l-3.7 3.7l-3.7 -3.7zM366.10 414.72l3.7 3.7l-3.7 3.7l-3.7 -3.7zM368.44 413.93l3.7 3.7l-3.7 3.7l-3.7 -3.7zM370.77 413.15l3.7 3.7l-3.7 3.7l-3.7 -3.7zM373.10 412.38l3.7 3.7l-3.7 3.7l-3.7 -3.7zM375.44 411.62l3.7 3.7l-3.7 3.7l-3.7 -3.7zM377.77 410.87l3.7 3.7l-3.7 3.7l-3.7 -3.7zM380.11 410.13l3.7 3.7l-3.7 3.7l-3.7 -3.7zM382.44 409.41l3.7 3.7l-3.7 3.7l-3.7 -3.7zM384.78 408.71l3.7 3.7l-3.7 3.7l-3.7 -3.7zM387.11 408.02l3.7 3.7l-3.7 3.7l-3.7 -3.7zM389.44 407.34l3.7 3.7l-3.7 3.7l-3.7 -3.7zM391.78 406.69l3.7 3.7l-3.7 3.7l-3.7 -3.7zM394.11 406.05l3.7 3.7l-3.7 3.7l-3.7 -3.7zM396.45 405.44l3.7 3.7l-3.7 3.7l-3.7 -3.7zM398.78 404.84l3.7 3.7l-3.7 3.7l-3.7 -3.7zM401.12 404.27l3.7 3.7l-3.7 3.7l-3.7 -3.7zM403.45 403.72l3.7 3.7l-3.7 3.7l-3.7 -3.7zM405.78 403.19l3.7 3.7l-3.7 3.7l-3.7 -3.7zM408.12 402.69l3.7 3.7l-3.7 3.7l-3.7 -3.7zM410.45 402.21l3.7 3.7l-3.7 3.7l-3.7 -3.7zM412.79 401.75l3.7 3.7l-3.7 3.7l-3.7 -3.7zM415.12 401.33l3.7 3.7l-3.7 3.7l-3.7 -3.7zM417.45 400.92l3.7 3.7l-3.7 3.7l-3.7 -3.7zM419.79 400.55l3.7 3.7l-3.7 3.7l-3.7 -3.7zM422.12 400.21l3.7 3.7l-3.7 3.7l-3.7 -3.7zM424.46 399.89l3.7 3.7l-3.7 3.7l-3.7 -3.7zM426.79 399.60l3.7 3.7l-3.7 3.7l-3.7 -3.7zM429.13 399.34l3.7 3.7l-3.7 3.7l-3.7 -3.7zM431.46 399.12l3.7 3.7l-3.7 3.7l-3.7 -3.7zM433.79 398.92l3.7 3.7l-3.7 3.7l-3.7 -3.7zM436.13 398.76l3.7 3.7l-3.7 3.7l-3.7 -3.7zM438.46 398.62l3.7 3.7l-3.7 3.7l-3.7 -3.7zM440.80 398.52l3.7 3.7l-3.7 3.7l-3.7 -3.7zM443.13 398.45l3.7 3.7l-3.7 3.7l-3.7 -3.7zM445.47 398.41l3.7 3.7l-3.7 3.7l-3.7 -3.7zM447.80 398.41l3.7 3.7l-3.7 3.7l-3.7 -3.7zM450.13 398.43l3.7 3.7l-3.7 3.7l-3.7 -3.7zM452.47 398.49l3.7 3.7l-3.7 3.7l-3.7 -3.7zM454.80 398.58l3.7 3.7l-3.7 3.7l-3.7 -3.7zM457.14 398.71l3.7 3.7l-3.7 3.7l-3.7 -3.7zM459.47 398.87l3.7 3.7l-3.7 3.7l-3.7 -3.7zM461.81 399.05l3.7 3.7l-3.7 3.7l-3.7 -3.7zM464.14 399.27l3.7 3.7l-3.7 3.7l-3.7 -3.7zM466.47 399.53l3.7 3.7l-3.7 3.7l-3.7 -3.7zM468.81 399.81l3.7 3.7l-3.7 3.7l-3.7 -3.7zM471.14 400.12l3.7 3.7l-3.7 3.7l-3.7 -3.7zM473.48 400.46l3.7 3.7l-3.7 3.7l-3.7 -3.7zM475.81 400.84l3.7 3.7l-3.7 3.7l-3.7 -3.7zM478.15 401.24l3.7 3.7l-3.7 3.7l-3.7 -3.7zM480.48 401.67l3.7 3.7l-3.7 3.7l-3.7 -3.7zM482.81 402.12l3.7 3.7l-3.7 3.7l-3.7 -3.7zM485.15 402.61l3.7 3.7l-3.7 3.7l-3.7 -3.7zM487.48 403.12l3.7 3.7l-3.7 3.7l-3.7 -3.7zM489.82 403.65l3.7 3.7l-3.7 3.7l-3.7 -3.7zM492.15 404.21l3.7 3.7l-3.7 3.7l-3.7 -3.7zM494.48 404.79l3.7 3.7l-3.7 3.7l-3.7 -3.7zM496.82 405.39l3.7 3.7l-3.7 3.7l-3.7 -3.7zM499.15 406.01l3.7 3.7l-3.7 3.7l-3.7 -3.7zM501.49 406.65l3.7 3.7l-3.7 3.7l-3.7 -3.7zM503.82 407.31l3.7 3.7l-3.7 3.7l-3.7 -3.7zM506.16 407.98l3.7 3.7l-3.7 3.7l-3.7 -3.7zM508.49 408.67l3.7 3.7l-3.7 3.7l-3.7 -3.7zM510.82 409.37l3.7 3.7l-3.7 3.7l-3.7 -3.7zM513.16 410.09l3.7 3.7l-3.7 3.7l-3.7 -3.7zM515.49 410.81l3.7 3.7l-3.7 3.7l-3.7 -3.7zM517.83 411.55l3.7 3.7l-3.7 3.7l-3.7 -3.7zM520.16 412.29l3.7 3.7l-3.7 3.7l-3.7 -3.7zM522.50 413.04l3.7 3.7l-3.7 3.7l-3.7 -3.7zM524.83 413.80l3.7 3.7l-3.7 3.7l-3.7 -3.7zM527.16 414.55l3.7 3.7l-3.7 3.7l-3.7 -3.7zM529.50 415.31l3.7 3.7l-3.7 3.7l-3.7 -3.7zM531.83 416.07l3.7 3.7l-3.7 3.7l-3.7 -3.7zM534.17 416.82l3.7 3.7l-3.7 3.7l-3.7 -3.7zM536.50 417.58l3.7 3.7l-3.7 3.7l-3.7 -3.7zM538.84 418.32l3.7 3.7l-3.7 3.7l-3.7 -3.7zM541.17 419.07l3.7 3.7l-3.7 3.7l-3.7 -3.7zM543.50 419.80l3.7 3.7l-3.7 3.7l-3.7 -3.7zM545.84 420.52l3.7 3.7l-3.7 3.7l-3.7 -3.7zM548.17 421.23l3.7 3.7l-3.7 3.7l-3.7 -3.7zM550.51 421.93l3.7 3.7l-3.7 3.7l-3.7 -3.7zM552.84 422.62l3.7 3.7l-3.7 3.7l-3.7 -3.7zM555.18 423.29l3.7 3.7l-3.7 3.7l-3.7 -3.7zM557.51 423.94l3.7 3.7l-3.7 3.7l-3.7 -3.7zM559.84 424.57l3.7 3.7l-3.7 3.7l-3.7 -3.7zM562.18 425.19l3.7 3.7l-3.7 3.7l-3.7 -3.7zM564.51 425.78l3.7 3.7l-3.7 3.7l-3.7 -3.7zM566.85 426.35l3.7 3.7l-3.7 3.7l-3.7 -3.7zM569.18 426.89l3.7 3.7l-3.7 3.7l-3.7 -3.7zM571.52 427.42l3.7 3.7l-3.7 3.7l-3.7 -3.7zM573.85 427.91l3.7 3.7l-3.7 3.7l-3.7 -3.7zM576.18 428.38l3.7 3.7l-3.7 3.7l-3.7 -3.7zM578.52 428.83l3.7 3.7l-3.7 3.7l-3.7 -3.7zM580.85 429.24l3.7 3.7l-3.7 3.7l-3.7 -3.7zM583.19 429.62l3.7 3.7l-3.7 3.7l-3.7 -3.7zM585.52 429.98l3.7 3.7l-3.7 3.7l-3.7 -3.7zM587.85 430.30l3.7 3.7l-3.7 3.7l-3.7 -3.7zM590.19 430.59l3.7 3.7l-3.7 3.7l-3.7 -3.7zM592.52 430.85l3.7 3.7l-3.7 3.7l-3.7 -3.7zM594.86 431.07l3.7 3.7l-3.7 3.7l-3.7 -3.7zM597.19 431.27l3.7 3.7l-3.7 3.7l-3.7 -3.7zM599.53 431.42l3.7 3.7l-3.7 3.7l-3.7 -3.7zM601.86 431.55l3.7 3.7l-3.7 3.7l-3.7 -3.7zM604.19 431.64l3.7 3.7l-3.7 3.7l-3.7 -3.7zM606.53 431.70l3.7 3.7l-3.7 3.7l-3.7 -3.7zM608.86 431.72l3.7 3.7l-3.7 3.7l-3.7 -3.7zM611.20 431.71l3.7 3.7l-3.7 3.7l-3.7 -3.7zM613.53 431.66l3.7 3.7l-3.7 3.7l-3.7 -3.7zM615.87 431.58l3.7 3.7l-3.7 3.7l-3.7 -3.7zM618.20 431.46l3.7 3.7l-3.7 3.7l-3.7 -3.7zM620.53 431.31l3.7 3.7l-3.7 3.7l-3.7 -3.7zM622.87 431.12l3.7 3.7l-3.7 3.7l-3.7 -3.7zM625.20 430.90l3.7 3.7l-3.7 3.7l-3.7 -3.7zM627.54 430.65l3.7 3.7l-3.7 3.7l-3.7 -3.7zM629.87 430.37l3.7 3.7l-3.7 3.7l-3.7 -3.7zM632.21 430.05l3.7 3.7l-3.7 3.7l-3.7 -3.7zM634.54 429.70l3.7 3.7l-3.7 3.7l-3.7 -3.7zM636.87 429.31l3.7 3.7l-3.7 3.7l-3.7 -3.7zM639.21 428.90l3.7 3.7l-3.7 3.7l-3.7 -3.7zM641.54 428.45l3.7 3.7l-3.7 3.7l-3.7 -3.7zM643.88 427.98l3.7 3.7l-3.7 3.7l-3.7 -3.7zM646.21 427.48l3.7 3.7l-3.7 3.7l-3.7 -3.7zM648.55 426.94l3.7 3.7l-3.7 3.7l-3.7 -3.7zM650.88 426.38l3.7 3.7l-3.7 3.7l-3.7 -3.7zM653.21 425.79l3.7 3.7l-3.7 3.7l-3.7 -3.7zM655.55 425.18l3.7 3.7l-3.7 3.7l-3.7 -3.7zM657.88 424.54l3.7 3.7l-3.7 3.7l-3.7 -3.7zM660.22 423.87l3.7 3.7l-3.7 3.7l-3.7 -3.7zM662.55 423.18l3.7 3.7l-3.7 3.7l-3.7 -3.7zM664.88 422.47l3.7 3.7l-3.7 3.7l-3.7 -3.7zM667.22 421.73l3.7 3.7l-3.7 3.7l-3.7 -3.7zM669.55 420.98l3.7 3.7l-3.7 3.7l-3.7 -3.7zM671.89 420.20l3.7 3.7l-3.7 3.7l-3.7 -3.7zM674.22 419.40l3.7 3.7l-3.7 3.7l-3.7 -3.7zM676.56 418.59l3.7 3.7l-3.7 3.7l-3.7 -3.7zM678.89 417.76l3.7 3.7l-3.7 3.7l-3.7 -3.7zM681.22 416.91l3.7 3.7l-3.7 3.7l-3.7 -3.7zM683.56 416.04l3.7 3.7l-3.7 3.7l-3.7 -3.7zM685.89 415.16l3.7 3.7l-3.7 3.7l-3.7 -3.7zM688.23 414.27l3.7 3.7l-3.7 3.7l-3.7 -3.7zM690.56 413.36l3.7 3.7l-3.7 3.7l-3.7 -3.7zM692.90 412.45l3.7 3.7l-3.7 3.7l-3.7 -3.7zM695.23 411.52l3.7 3.7l-3.7 3.7l-3.7 -3.7zM697.56 410.58l3.7 3.7l-3.7 3.7l-3.7 -3.7zM699.90 409.63l3.7 3.7l-3.7 3.7l-3.7 -3.7zM702.23 408.68l3.7 3.7l-3.7 3.7l-3.7 -3.7zM704.57 407.72l3.7 3.7l-3.7 3.7l-3.7 -3.7zM706.90 406.75l3.7 3.7l-3.7 3.7l-3.7 -3.7zM709.24 405.78l3.7 3.7l-3.7 3.7l-3.7 -3.7zM711.57 404.80l3.7 3.7l-3.7 3.7l-3.7 -3.7zM713.90 403.82l3.7 3.7l-3.7 3.7l-3.7 -3.7zM716.24 402.84l3.7 3.7l-3.7 3.7l-3.7 -3.7zM718.57 401.86l3.7 3.7l-3.7 3.7l-3.7 -3.7zM720.91 400.88l3.7 3.7l-3.7 3.7l-3.7 -3.7zM723.24 399.90l3.7 3.7l-3.7 3.7l-3.7 -3.7zM725.58 398.92l3.7 3.7l-3.7 3.7l-3.7 -3.7zM727.91 397.95l3.7 3.7l-3.7 3.7l-3.7 -3.7zM730.24 396.97l3.7 3.7l-3.7 3.7l-3.7 -3.7zM732.58 396.01l3.7 3.7l-3.7 3.7l-3.7 -3.7zM734.91 395.05l3.7 3.7l-3.7 3.7l-3.7 -3.7zM737.25 394.09l3.7 3.7l-3.7 3.7l-3.7 -3.7zM739.58 393.14l3.7 3.7l-3.7 3.7l-3.7 -3.7zM741.92 392.20l3.7 3.7l-3.7 3.7l-3.7 -3.7zM744.25 391.27l3.7 3.7l-3.7 3.7l-3.7 -3.7zM746.58 390.35l3.7 3.7l-3.7 3.7l-3.7 -3.7zM748.92 389.44l3.7 3.7l-3.7 3.7l-3.7 -3.7zM751.25 388.54l3.7 3.7l-3.7 3.7l-3.7 -3.7zM753.59 387.66l3.7 3.7l-3.7 3.7l-3.7 -3.7zM755.92 386.79l3.7 3.7l-3.7 3.7l-3.7 -3.7zM758.25 385.93l3.7 3.7l-3.7 3.7l-3.7 -3.7zM760.59 385.09l3.7 3.7l-3.7 3.7l-3.7 -3.7zM762.92 384.26l3.7 3.7l-3.7 3.7l-3.7 -3.7zM765.26 383.45l3.7 3.7l-3.7 3.7l-3.7 -3.7zM767.59 382.65l3.7 3.7l-3.7 3.7l-3.7 -3.7zM769.93 381.88l3.7 3.7l-3.7 3.7l-3.7 -3.7zM772.26 381.12l3.7 3.7l-3.7 3.7l-3.7 -3.7zM774.59 380.38l3.7 3.7l-3.7 3.7l-3.7 -3.7zM776.93 379.66l3.7 3.7l-3.7 3.7l-3.7 -3.7zM779.26 378.96l3.7 3.7l-3.7 3.7l-3.7 -3.7zM781.60 378.29l3.7 3.7l-3.7 3.7l-3.7 -3.7zM783.93 377.63l3.7 3.7l-3.7 3.7l-3.7 -3.7zM786.27 377.00l3.7 3.7l-3.7 3.7l-3.7 -3.7zM788.60 376.39l3.7 3.7l-3.7 3.7l-3.7 -3.7zM790.93 375.81l3.7 3.7l-3.7 3.7l-3.7 -3.7zM793.27 375.25l3.7 3.7l-3.7 3.7l-3.7 -3.7zM795.60 374.71l3.7 3.7l-3.7 3.7l-3.7 -3.7zM797.94 374.20l3.7 3.7l-3.7 3.7l-3.7 -3.7zM800.27 373.72l3.7 3.7l-3.7 3.7l-3.7 -3.7zM802.61 373.26l3.7 3.7l-3.7 3.7l-3.7 -3.7zM804.94 372.83l3.7 3.7l-3.7 3.7l-3.7 -3.7zM807.27 372.43l3.7 3.7l-3.7 3.7l-3.7 -3.7zM809.61 372.05l3.7 3.7l-3.7 3.7l-3.7 -3.7zM811.94 371.71l3.7 3.7l-3.7 3.7l-3.7 -3.7zM814.28 371.39l3.7 3.7l-3.7 3.7l-3.7 -3.7zM816.61 371.10l3.7 3.7l-3.7 3.7l-3.7 -3.7zM818.95 370.84l3.7 3.7l-3.7 3.7l-3.7 -3.7zM821.28 370.61l3.7 3.7l-3.7 3.7l-3.7 -3.7zM823.61 370.42l3.7 3.7l-3.7 3.7l-3.7 -3.7zM825.95 370.25l3.7 3.7l-3.7 3.7l-3.7 -3.7zM828.28 370.11l3.7 3.7l-3.7 3.7l-3.7 -3.7zM830.62 370.01l3.7 3.7l-3.7 3.7l-3.7 -3.7zM832.95 369.93l3.7 3.7l-3.7 3.7l-3.7 -3.7zM835.28 369.89l3.7 3.7l-3.7 3.7l-3.7 -3.7zM837.62 369.88l3.7 3.7l-3.7 3.7l-3.7 -3.7zM839.95 369.90l3.7 3.7l-3.7 3.7l-3.7 -3.7zM842.29 369.95l3.7 3.7l-3.7 3.7l-3.7 -3.7zM844.62 370.04l3.7 3.7l-3.7 3.7l-3.7 -3.7zM846.96 370.16l3.7 3.7l-3.7 3.7l-3.7 -3.7zM849.29 370.31l3.7 3.7l-3.7 3.7l-3.7 -3.7zM851.62 370.49l3.7 3.7l-3.7 3.7l-3.7 -3.7zM853.96 370.70l3.7 3.7l-3.7 3.7l-3.7 -3.7zM856.29 370.95l3.7 3.7l-3.7 3.7l-3.7 -3.7zM858.63 371.23l3.7 3.7l-3.7 3.7l-3.7 -3.7zM860.96 371.54l3.7 3.7l-3.7 3.7l-3.7 -3.7zM863.30 371.88l3.7 3.7l-3.7 3.7l-3.7 -3.7zM865.63 372.25l3.7 3.7l-3.7 3.7l-3.7 -3.7zM867.96 372.66l3.7 3.7l-3.7 3.7l-3.7 -3.7zM870.30 373.09l3.7 3.7l-3.7 3.7l-3.7 -3.7zM872.63 373.56l3.7 3.7l-3.7 3.7l-3.7 -3.7zM874.97 374.06l3.7 3.7l-3.7 3.7l-3.7 -3.7zM877.30 374.58l3.7 3.7l-3.7 3.7l-3.7 -3.7zM879.64 375.14l3.7 3.7l-3.7 3.7l-3.7 -3.7zM881.97 375.73l3.7 3.7l-3.7 3.7l-3.7 -3.7zM884.30 376.34l3.7 3.7l-3.7 3.7l-3.7 -3.7zM886.64 376.99l3.7 3.7l-3.7 3.7l-3.7 -3.7zM888.97 377.66l3.7 3.7l-3.7 3.7l-3.7 -3.7zM891.31 378.36l3.7 3.7l-3.7 3.7l-3.7 -3.7zM893.64 379.08l3.7 3.7l-3.7 3.7l-3.7 -3.7zM895.98 379.84l3.7 3.7l-3.7 3.7l-3.7 -3.7zM898.31 380.62l3.7 3.7l-3.7 3.7l-3.7 -3.7zM900.64 381.42l3.7 3.7l-3.7 3.7l-3.7 -3.7zM902.98 382.25l3.7 3.7l-3.7 3.7l-3.7 -3.7zM905.31 383.10l3.7 3.7l-3.7 3.7l-3.7 -3.7zM907.65 383.97l3.7 3.7l-3.7 3.7l-3.7 -3.7zM909.98 384.87l3.7 3.7l-3.7 3.7l-3.7 -3.7zM912.32 385.79l3.7 3.7l-3.7 3.7l-3.7 -3.7zM914.65 386.73l3.7 3.7l-3.7 3.7l-3.7 -3.7zM916.98 387.69l3.7 3.7l-3.7 3.7l-3.7 -3.7zM919.32 388.67l3.7 3.7l-3.7 3.7l-3.7 -3.7zM921.65 389.66l3.7 3.7l-3.7 3.7l-3.7 -3.7zM923.99 390.68l3.7 3.7l-3.7 3.7l-3.7 -3.7zM926.32 391.71l3.7 3.7l-3.7 3.7l-3.7 -3.7zM928.65 392.75l3.7 3.7l-3.7 3.7l-3.7 -3.7zM930.99 393.81l3.7 3.7l-3.7 3.7l-3.7 -3.7zM933.32 394.88l3.7 3.7l-3.7 3.7l-3.7 -3.7zM935.66 395.97l3.7 3.7l-3.7 3.7l-3.7 -3.7zM937.99 397.07l3.7 3.7l-3.7 3.7l-3.7 -3.7zM940.33 398.18l3.7 3.7l-3.7 3.7l-3.7 -3.7zM942.66 399.29l3.7 3.7l-3.7 3.7l-3.7 -3.7zM944.99 400.42l3.7 3.7l-3.7 3.7l-3.7 -3.7zM947.33 401.55l3.7 3.7l-3.7 3.7l-3.7 -3.7zM949.66 402.69l3.7 3.7l-3.7 3.7l-3.7 -3.7zM952.00 403.83l3.7 3.7l-3.7 3.7l-3.7 -3.7zM954.33 404.98l3.7 3.7l-3.7 3.7l-3.7 -3.7zM956.67 406.14l3.7 3.7l-3.7 3.7l-3.7 -3.7z" fill="#000080"/><g font-family="Liberation Sans" font-size="11" fill="#333" letter-spacing="0.25"><text x="97" y="277.0" text-anchor="end">1.5</text><text x="97" y="324.0" text-anchor="end">1</text><text x="97" y="371.0" text-anchor="end">0.5</text><text x="97" y="418.0" text-anchor="end">0</text><text x="97" y="465.0" text-anchor="end">-0.5</text><text x="97" y="512.0" text-anchor="end">-1</text><text x="97" y="559.0" text-anchor="end">-1.5</text><text x="107.0" y="434" text-anchor="middle">0.0</text><text x="320.0" y="434" text-anchor="middle">90.0</text><text x="533.0" y="434" text-anchor="middle">180.0</text><text x="746.0" y="434" text-anchor="middle">270.0</text><text x="959.0" y="434" text-anchor="middle">360.0</text><text x="622.5" y="252" text-anchor="middle">Chart Title</text></g><rect x="997.5" y="369.5" width="186" height="57" fill="#fff" stroke="#444" stroke-width="1"/><rect x="1001" y="380" width="29" height="1" fill="#000080"/><path d="M1015.5 376.5l4 4l-4 4l-4 -4z" fill="#000080"/><text x="1033" y="384.0" font-family="Liberation Sans" font-size="11" fill="#333" letter-spacing="0.3">Dynamic EOT Radius</text><rect x="1001" y="397" width="29" height="1" fill="#ff00ff"/><rect x="1012" y="394" width="8" height="8" fill="#ff00ff"/><text x="1033" y="401.0" font-family="Liberation Sans" font-size="11" fill="#333" letter-spacing="0.3">Test EOT Radius</text><rect x="1001" y="415" width="29" height="1" fill="#ffff00"/><path d="M1015 412.0l0.5 0l4 8h-9z" fill="#ffff00"/><text x="1033" y="419.0" font-family="Liberation Sans" font-size="11" fill="#333" letter-spacing="0.3">Dynamic Offset EOT Radius</text></svg>
<div style="position:absolute;left:0;top:863px;width:1403px;height:1px;background:#a9a6a1"></div>
<div style="position:absolute;left:0;top:864px;width:1403px;height:3px;background:#dcdad5"></div>
<div style="position:absolute;left:438px;top:864px;width:520px;height:6px;background:#fff;border-radius:4px 4px 0 0;border:1px solid #b9b6b0;box-sizing:border-box"></div>
</body></html>
